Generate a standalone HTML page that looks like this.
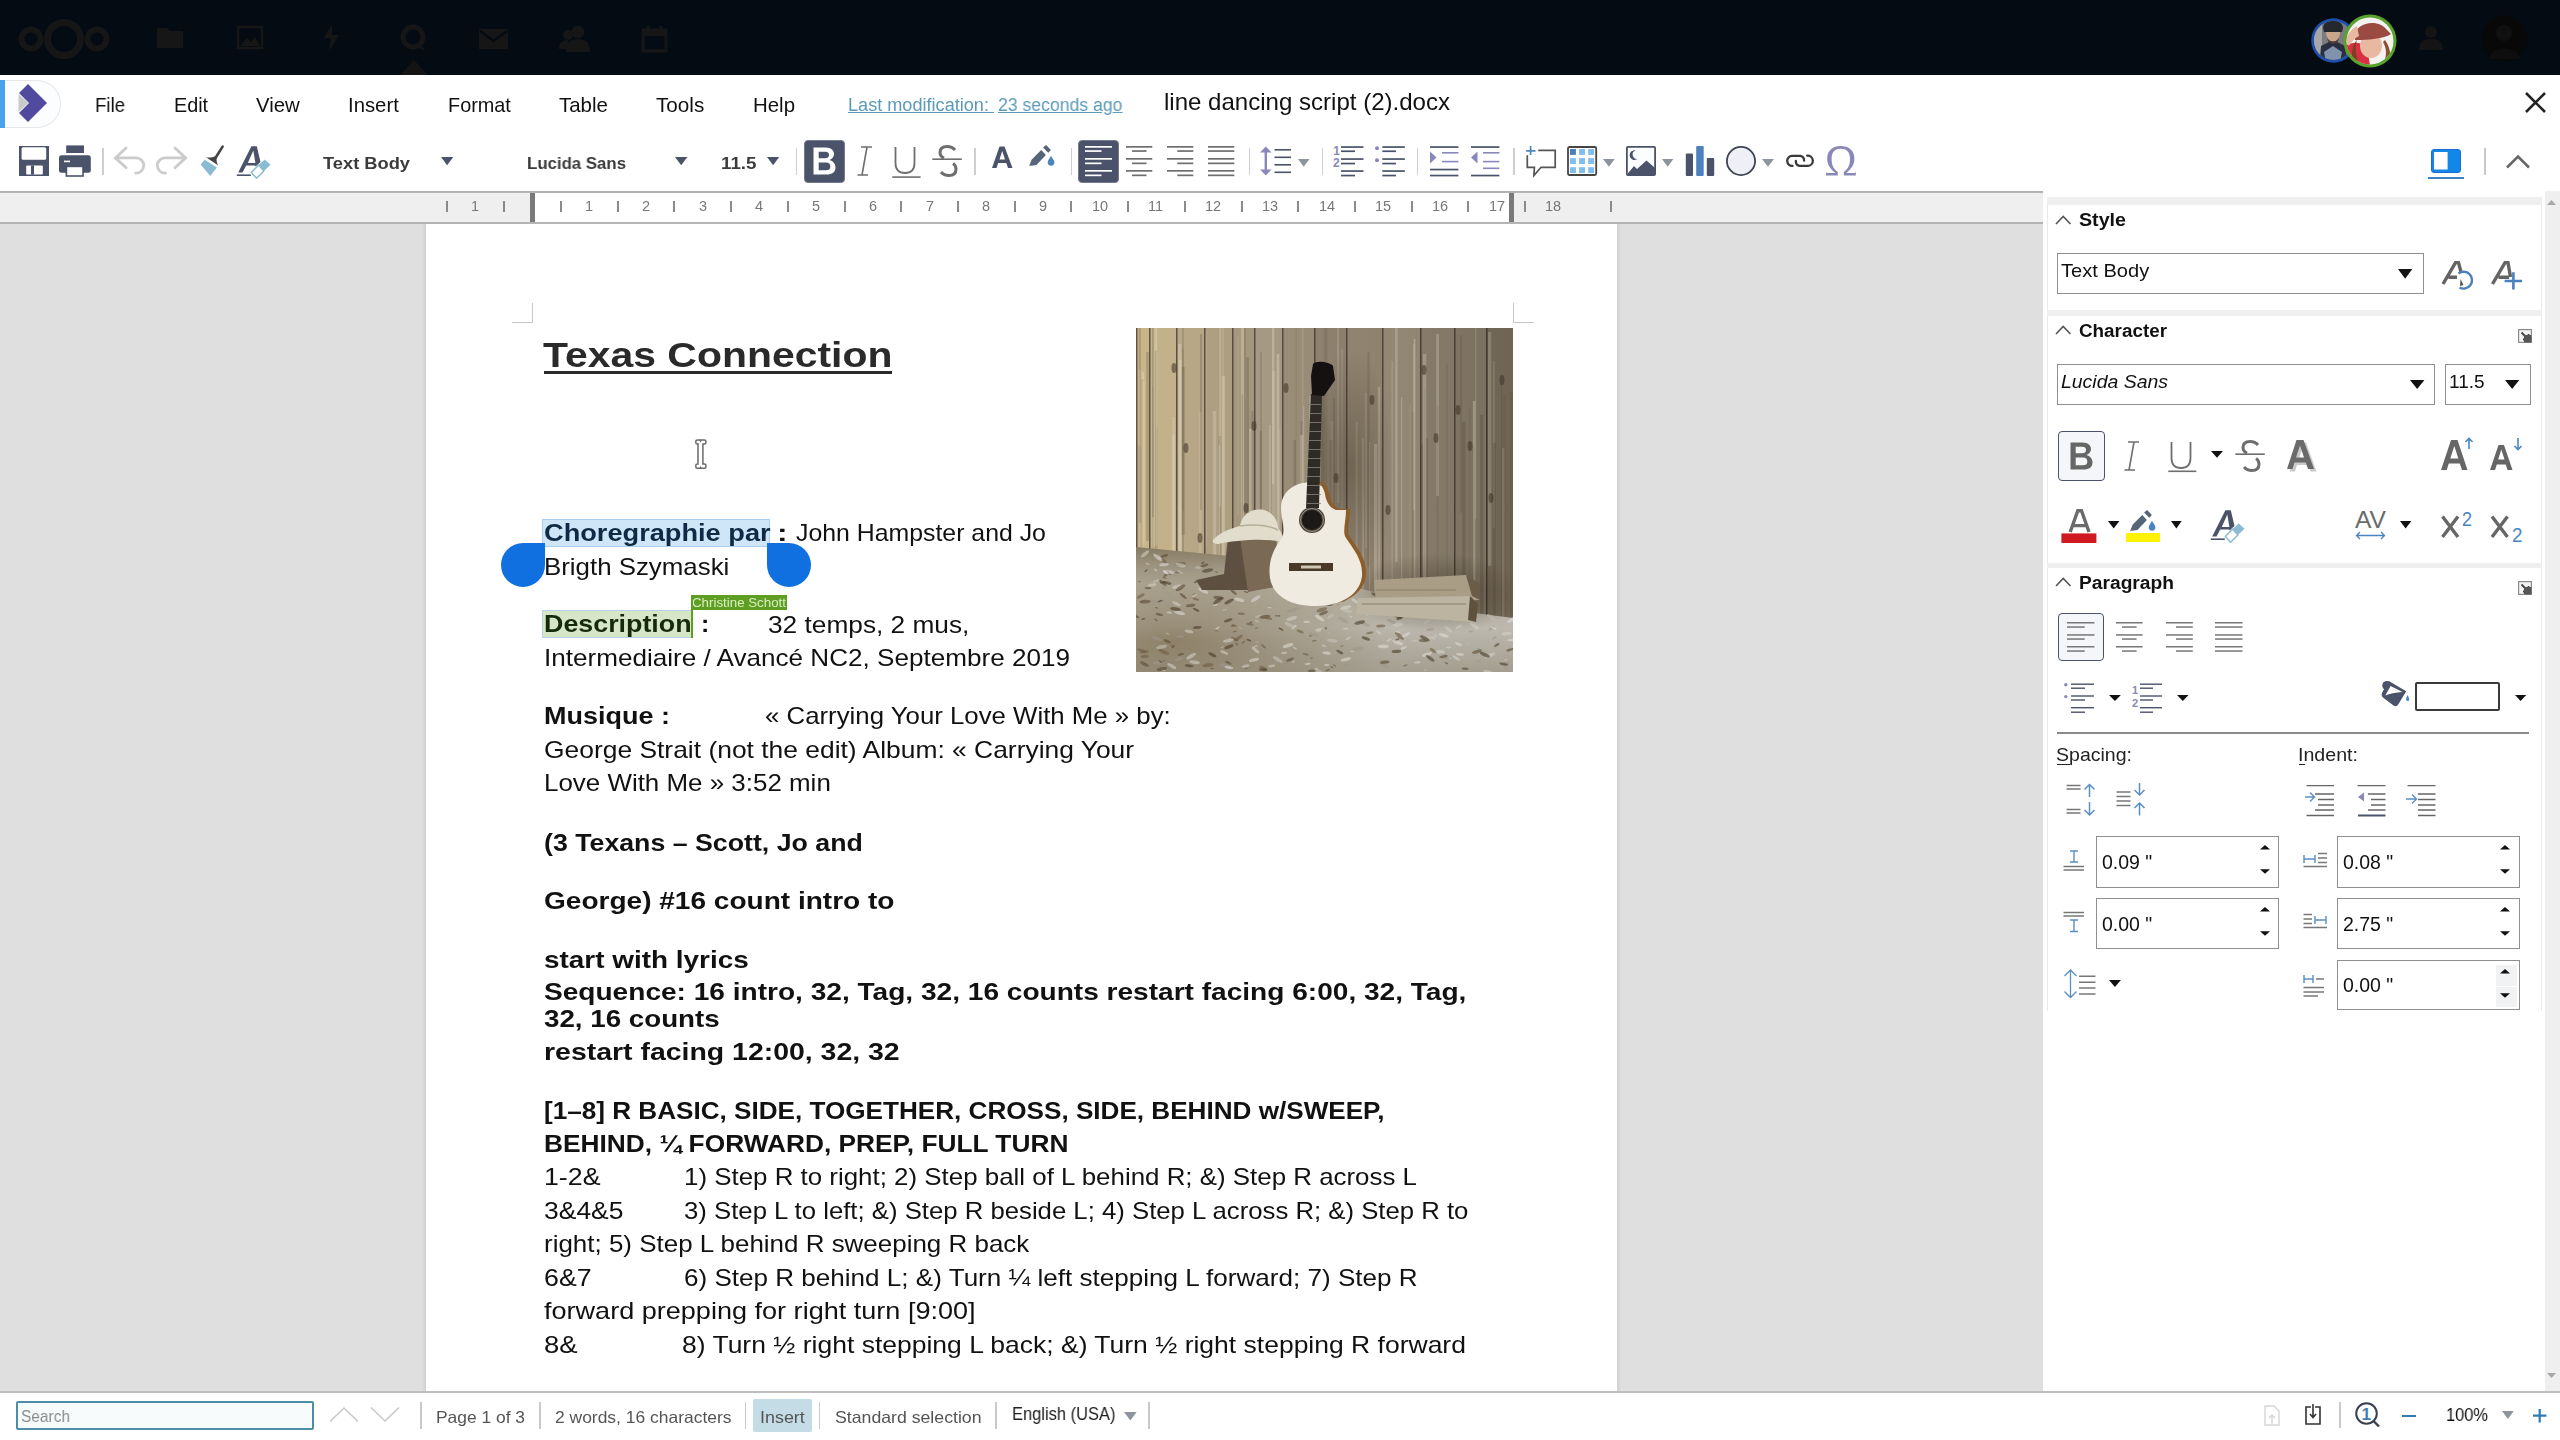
<!DOCTYPE html>
<html><head><meta charset="utf-8"><title>line dancing script (2).docx</title>
<style>
html,body{margin:0;padding:0;}
body{width:2560px;height:1440px;position:relative;overflow:hidden;background:#fff;font-family:"Liberation Sans",sans-serif;}
.tx{position:absolute;white-space:pre;will-change:transform;}
svg{overflow:visible;}

</style></head><body>
<div style="position:absolute;left:0px;top:0px;width:2560px;height:75px;background:#040b13;"></div>
<div style="position:absolute;left:0px;top:80px;width:5px;height:48px;background:#4aa3ea;"></div>
<div style="position:absolute;left:5px;top:80px;width:56px;height:48px;background:#fbfdff;border:1.5px solid #e6e6e6;border-left:none;border-radius:0 24px 24px 0;box-sizing:border-box;"></div>
<div id="t1" class="tx" style="left:94.6px;top:96.04px;font-size:19.8px;line-height:19.8px;color:#111;font-weight:normal;font-family:'Liberation Sans',sans-serif;transform:scaleX(0.9459);transform-origin:0 0;">File</div>
<div id="t2" class="tx" style="left:174.3px;top:96.04px;font-size:19.8px;line-height:19.8px;color:#111;font-weight:normal;font-family:'Liberation Sans',sans-serif;transform:scaleX(0.9973);transform-origin:0 0;">Edit</div>
<div id="t3" class="tx" style="left:256.2px;top:96.04px;font-size:19.8px;line-height:19.8px;color:#111;font-weight:normal;font-family:'Liberation Sans',sans-serif;transform:scaleX(1.0298);transform-origin:0 0;">View</div>
<div id="t4" class="tx" style="left:348px;top:96.04px;font-size:19.8px;line-height:19.8px;color:#111;font-weight:normal;font-family:'Liberation Sans',sans-serif;transform:scaleX(1.0266);transform-origin:0 0;">Insert</div>
<div id="t5" class="tx" style="left:447.6px;top:96.04px;font-size:19.8px;line-height:19.8px;color:#111;font-weight:normal;font-family:'Liberation Sans',sans-serif;transform:scaleX(1.0039);transform-origin:0 0;">Format</div>
<div id="t6" class="tx" style="left:558.5px;top:96.04px;font-size:19.8px;line-height:19.8px;color:#111;font-weight:normal;font-family:'Liberation Sans',sans-serif;transform:scaleX(1.0339);transform-origin:0 0;">Table</div>
<div id="t7" class="tx" style="left:656.2px;top:96.04px;font-size:19.8px;line-height:19.8px;color:#111;font-weight:normal;font-family:'Liberation Sans',sans-serif;transform:scaleX(1.0457);transform-origin:0 0;">Tools</div>
<div id="t8" class="tx" style="left:753.3px;top:96.04px;font-size:19.8px;line-height:19.8px;color:#111;font-weight:normal;font-family:'Liberation Sans',sans-serif;transform:scaleX(1.0323);transform-origin:0 0;">Help</div>
<div id="t9" class="tx" style="left:848px;top:96.26px;font-size:18px;line-height:18px;color:#5b9ab8;font-weight:normal;font-family:'Liberation Sans',sans-serif;transform:scaleX(1.0064);transform-origin:0 0;text-decoration:underline;">Last modification: </div>
<div id="t10" class="tx" style="left:997.5px;top:96.26px;font-size:18px;line-height:18px;color:#5b9ab8;font-weight:normal;font-family:'Liberation Sans',sans-serif;transform:scaleX(0.9795);transform-origin:0 0;text-decoration:underline;">23 seconds ago</div>
<div id="t11" class="tx" style="left:1163.5px;top:89.68px;font-size:24px;line-height:24px;color:#111;font-weight:normal;font-family:'Liberation Sans',sans-serif;transform:scaleX(1.0019);transform-origin:0 0;">line dancing script (2).docx</div>
<div style="position:absolute;left:0px;top:191px;width:2043px;height:2px;background:#b4b4b4;"></div>
<div style="position:absolute;left:0px;top:193px;width:2043px;height:29px;background:#efefef;"></div>
<div style="position:absolute;left:0px;top:222px;width:2043px;height:2px;background:#b4b4b4;"></div>
<div style="position:absolute;left:534.5px;top:193px;width:975px;height:29px;background:#fff;"></div>
<div style="position:absolute;left:530px;top:193px;width:4.7px;height:29px;background:#7a7a7a;"></div>
<div style="position:absolute;left:1509px;top:193px;width:5px;height:29px;background:#7a7a7a;"></div>
<svg style="position:absolute;left:19px;top:146px;" width="30" height="30" viewBox="0 0 30 30"><path d="M0 0 H30 V30 H0 Z" fill="#4a5369"/><rect x="2.6" y="1.2" width="24.6" height="12.6" rx="1.5" fill="#fff"/><rect x="7.2" y="19.4" width="16.6" height="9.2" rx="1.2" fill="#fff"/><rect x="12" y="19.4" width="3" height="9.2" fill="#4a5369"/></svg>
<svg style="position:absolute;left:59px;top:145px;" width="32" height="32" viewBox="0 0 32 32"><rect x="7.2" y="0.4" width="17.8" height="7.6" fill="#4a5369"/><rect x="0" y="10.2" width="31.8" height="17.6" rx="2.5" fill="#4a5369"/><rect x="5" y="15.6" width="6" height="1.6" fill="#fff"/><rect x="7.4" y="21.4" width="16.6" height="9.6" fill="#fff" stroke="#4a5369" stroke-width="1.6"/></svg>
<div style="position:absolute;left:102.4px;top:148px;width:1.2px;height:27px;background:#cfcfcf;"></div>
<svg style="position:absolute;left:113px;top:146px;" width="34" height="32" viewBox="0 0 34 32"><path d="M13.1 1.9 L2.4 11.9 L13.1 21.8 M2.4 11.9 H23.6 A7.6 7.6 0 0 1 22.6 27.1" fill="none" stroke="#cbcbcb" stroke-width="2.8" stroke-linecap="round"/></svg>
<svg style="position:absolute;left:154px;top:146px;" width="34" height="32" viewBox="0 0 34 32"><path d="M21 1.9 L31.7 11.9 L21 21.8 M31.7 11.9 H10.5 A7.6 7.6 0 0 0 11.5 27.1" fill="none" stroke="#cbcbcb" stroke-width="2.8" stroke-linecap="round"/></svg>
<svg style="position:absolute;left:195px;top:140px;" width="80" height="42" viewBox="0 0 80 42"><path d="M27.6 6.6 L20.6 17.8" stroke="#444" stroke-width="2.6" stroke-linecap="round"/><path d="M11 17.3 C14 18 18 17 20.5 16.2 L21.6 18.5 C21.3 21 22 23.5 23.3 25.6 Z" fill="#444"/><path d="M9.7 19.7 L21.9 27.5 L15.3 35.9 L5.6 24.4 Z" fill="#8bbbd2"/><path d="M43.2 32.6 L56.4 6.3 H61.8 L65.5 22 L60.5 26.5 L60.2 25.6 H51.2 L47.5 32.6 Z M52.8 23 H60.4 L58.3 10.5 Z" fill="#4a5369"/><rect x="41.8" y="34.4" width="14" height="1.6" fill="#4a5369"/><path d="M69.7 19.4 L75.6 24.7 L68.9 31 L63.6 25 Z" fill="#8bbbd2"/><path d="M63.6 25 L68.9 31 L61.6 38.3 L56.3 32.5 Z" fill="#fff" stroke="#8bbbd2" stroke-width="1.5" stroke-linejoin="round"/></svg>
<div id="t12" class="tx" style="left:322.5px;top:154.81px;font-size:17px;line-height:17px;color:#3b3b3b;font-weight:bold;font-family:'Liberation Sans',sans-serif;transform:scaleX(1.0751);transform-origin:0 0;">Text Body</div>
<svg style="position:absolute;left:441px;top:157px;" width="12.300000000000011" height="8.300000000000011" viewBox="0 0 12.300000000000011 8.300000000000011"><path d="M0 0 H12.300000000000011 L6.150000000000006 8.300000000000011 Z" fill="#4a5369"/></svg>
<div id="t13" class="tx" style="left:526.5px;top:154.81px;font-size:17px;line-height:17px;color:#3b3b3b;font-weight:bold;font-family:'Liberation Sans',sans-serif;transform:scaleX(0.9886);transform-origin:0 0;">Lucida Sans</div>
<svg style="position:absolute;left:674.6px;top:157px;" width="12.399999999999977" height="8.300000000000011" viewBox="0 0 12.399999999999977 8.300000000000011"><path d="M0 0 H12.399999999999977 L6.199999999999989 8.300000000000011 Z" fill="#4a5369"/></svg>
<div id="t14" class="tx" style="left:721px;top:154.81px;font-size:17px;line-height:17px;color:#3b3b3b;font-weight:bold;font-family:'Liberation Sans',sans-serif;transform:scaleX(1.1040);transform-origin:0 0;">11.5</div>
<svg style="position:absolute;left:766.8px;top:157px;" width="12.200000000000045" height="8.300000000000011" viewBox="0 0 12.200000000000045 8.300000000000011"><path d="M0 0 H12.200000000000045 L6.100000000000023 8.300000000000011 Z" fill="#4a5369"/></svg>
<div style="position:absolute;left:796.3px;top:148px;width:1.2px;height:27px;background:#cfcfcf;"></div>
<div style="position:absolute;left:804.3px;top:140px;width:40.5px;height:42.6px;background:#4a5369;border:1px solid #737b8c;border-radius:4px;box-sizing:border-box;"></div>
<svg style="position:absolute;left:811.6px;top:146px;" width="25" height="30" viewBox="0 0 25 30"><path d="M1.5 1.5 H13 C20 1.5 22 5 22 8 C22 11 20 13 17.5 14 C21 15 23.5 17.5 23.5 21.5 C23.5 26 20.5 28.5 14 28.5 H1.5 Z M6.7 5.8 V12.3 H13 C15.8 12.3 17 11 17 9 C17 7 15.8 5.8 13 5.8 Z M6.7 16.5 V24.2 H13.8 C17 24.2 18.3 23 18.3 20.4 C18.3 17.8 17 16.5 13.8 16.5 Z" fill="#fff"/></svg>
<svg style="position:absolute;left:857px;top:146px;" width="16" height="30" viewBox="0 0 16 30"><path d="M4 1 H15 M0.5 29 H11 M10 1 L5 29" stroke="#6e6e6e" stroke-width="1.6" fill="none"/></svg>
<svg style="position:absolute;left:892px;top:146px;" width="30" height="32" viewBox="0 0 30 32"><path d="M3.5 1 V17 C3.5 24 7 27 13 27 C19 27 22.5 24 22.5 17 V1" stroke="#6e6e6e" stroke-width="1.8" fill="none"/><rect x="0.3" y="30.3" width="28.3" height="1.6" fill="#6e6e6e"/></svg>
<svg style="position:absolute;left:932px;top:145px;" width="31" height="33" viewBox="0 0 31 33"><path d="M23 5 C21 2.5 18 1.5 15 1.5 C10 1.5 8 4 8 7.5 C8 10.3 9.5 12 12 13.2" stroke="#6e6e6e" stroke-width="3" fill="none"/><path d="M9 27 C11 29.5 14 30.5 17 30.5 C22 30.5 24 28 24 24 C24 21.5 23 19.8 21 18.5" stroke="#6e6e6e" stroke-width="3" fill="none"/><rect x="0.3" y="13.4" width="29.5" height="1.6" fill="#6e6e6e"/></svg>
<div style="position:absolute;left:974.4px;top:148px;width:1.2px;height:27px;background:#cfcfcf;"></div>
<svg style="position:absolute;left:992px;top:146px;" width="21" height="23" viewBox="0 0 21 23"><path d="M0 22 L7.5 0.5 H12.5 L20.5 22 H16 L14.3 17 H6.2 L4.5 22 Z M7.5 13.5 H13 L10.2 5 Z" fill="#4a5369"/></svg>
<svg style="position:absolute;left:980px;top:138px;" width="80" height="34" viewBox="0 0 80 34"><path d="M63.1 9.6 L66.1 7.1 L70.9 12 L68.2 14.8 Z" fill="#55657a"/><path d="M61.25 12.1 L65.9 17.1 L56.4 27.1 L53 27.4 L49.1 27.7 L51.8 21.6 Z" fill="#55657a"/><path d="M71 17.9 C69.5 20.5 67.7 22.5 67.7 24.3 A3.35 3.35 0 0 0 74.4 24.3 C74.4 22.5 72.5 20.5 71 17.9 Z" fill="#4a85c0"/></svg>
<div style="position:absolute;left:1070.6px;top:148px;width:1.2px;height:27px;background:#cfcfcf;"></div>
<div style="position:absolute;left:1078.2px;top:140px;width:40.5px;height:42.6px;background:#4a5369;border:1px solid #737b8c;border-radius:4px;box-sizing:border-box;"></div>
<svg style="position:absolute;left:1084.8px;top:146px;" width="28" height="31" viewBox="0 0 28 31"><rect x="0" y="0" width="27" height="1.7" fill="#fff"/><rect x="0" y="4.2" width="16.5" height="1.7" fill="#fff"/><rect x="0" y="12" width="27" height="1.7" fill="#fff"/><rect x="0" y="16.5" width="16.5" height="1.7" fill="#fff"/><rect x="0" y="24" width="27" height="1.7" fill="#fff"/><rect x="0" y="28.5" width="16.5" height="1.7" fill="#fff"/></svg>
<svg style="position:absolute;left:1125.8px;top:146px;" width="28" height="31" viewBox="0 0 28 31"><rect x="0" y="0" width="26.3" height="1.7" fill="#6e6e6e"/><rect x="6" y="4.2" width="14.5" height="1.7" fill="#6e6e6e"/><rect x="0" y="12" width="26.3" height="1.7" fill="#6e6e6e"/><rect x="6" y="16.5" width="14.5" height="1.7" fill="#6e6e6e"/><rect x="0" y="24" width="26.3" height="1.7" fill="#6e6e6e"/><rect x="6" y="28.5" width="14.5" height="1.7" fill="#6e6e6e"/></svg>
<svg style="position:absolute;left:1166.8px;top:146px;" width="28" height="31" viewBox="0 0 28 31"><rect x="0" y="0" width="26.3" height="1.7" fill="#6e6e6e"/><rect x="10.3" y="4.2" width="16.0" height="1.7" fill="#6e6e6e"/><rect x="0" y="12" width="26.3" height="1.7" fill="#6e6e6e"/><rect x="10.3" y="16.5" width="16.0" height="1.7" fill="#6e6e6e"/><rect x="0" y="24" width="26.3" height="1.7" fill="#6e6e6e"/><rect x="10.3" y="28.5" width="16.0" height="1.7" fill="#6e6e6e"/></svg>
<svg style="position:absolute;left:1207.8px;top:146px;" width="28" height="31" viewBox="0 0 28 31"><rect x="0" y="0" width="26.3" height="1.7" fill="#6e6e6e"/><rect x="0" y="4.2" width="26.3" height="1.7" fill="#6e6e6e"/><rect x="0" y="12" width="26.3" height="1.7" fill="#6e6e6e"/><rect x="0" y="16.5" width="26.3" height="1.7" fill="#6e6e6e"/><rect x="0" y="24" width="26.3" height="1.7" fill="#6e6e6e"/><rect x="0" y="28.5" width="26.3" height="1.7" fill="#6e6e6e"/></svg>
<div style="position:absolute;left:1248.5px;top:148px;width:1.2px;height:27px;background:#cfcfcf;"></div>
<svg style="position:absolute;left:1260px;top:146px;" width="32" height="31" viewBox="0 0 32 31"><path d="M5.8 0.5 L11.5 6.5 H7 V23.5 H11.5 L5.8 29.5 L0 23.5 H4.6 V6.5 H0 Z" fill="#8a87ba"/><rect x="14.5" y="3" width="16.5" height="1.6" fill="#4a5369"/><rect x="14.5" y="10.5" width="16.5" height="1.6" fill="#4a5369"/><rect x="14.5" y="18" width="16.5" height="1.6" fill="#4a5369"/><rect x="14.5" y="25.5" width="16.5" height="1.6" fill="#4a5369"/></svg>
<svg style="position:absolute;left:1297.5px;top:159px;" width="11.5" height="7.699999999999989" viewBox="0 0 11.5 7.699999999999989"><path d="M0 0 H11.5 L5.75 7.699999999999989 Z" fill="#8d949e"/></svg>
<div style="position:absolute;left:1321.6px;top:148px;width:1.2px;height:27px;background:#cfcfcf;"></div>
<svg style="position:absolute;left:1333px;top:145px;" width="32" height="32" viewBox="0 0 32 32"><text x="0.3" y="10" font-family="Liberation Sans" font-size="12" font-weight="bold" fill="#8a87ba">1</text><text x="0" y="21.8" font-family="Liberation Sans" font-size="12" font-weight="bold" fill="#8a87ba">2</text><rect x="8" y="1.2" width="22.5" height="1.7" fill="#4a5369"/><rect x="8" y="5.4" width="14" height="1.7" fill="#4a5369"/><rect x="8" y="13.2" width="22.5" height="1.7" fill="#4a5369"/><rect x="8" y="17.7" width="14" height="1.7" fill="#4a5369"/><rect x="8" y="25.2" width="22.5" height="1.7" fill="#4a5369"/><rect x="8" y="29.7" width="14" height="1.7" fill="#4a5369"/></svg>
<svg style="position:absolute;left:1373px;top:145px;" width="33" height="32" viewBox="0 0 33 32"><circle cx="4" cy="3.2" r="2" fill="#8a87ba"/><circle cx="4" cy="15.2" r="2" fill="#8a87ba"/><rect x="9.3" y="1.2" width="22.5" height="1.7" fill="#4a5369"/><rect x="9.3" y="5.4" width="13.7" height="1.7" fill="#4a5369"/><rect x="9.3" y="13.2" width="22.5" height="1.7" fill="#4a5369"/><rect x="9.3" y="17.7" width="13.7" height="1.7" fill="#4a5369"/><rect x="9.3" y="25.2" width="22.5" height="1.7" fill="#4a5369"/><rect x="9.3" y="29.7" width="13.7" height="1.7" fill="#4a5369"/></svg>
<div style="position:absolute;left:1417.3px;top:148px;width:1.2px;height:27px;background:#cfcfcf;"></div>
<svg style="position:absolute;left:1430px;top:145px;" width="30" height="32" viewBox="0 0 30 32"><path d="M0 6.4 L6.5 12.5 L0 18.5 Z" fill="#8a87ba"/><rect x="0" y="1.2" width="28.4" height="1.7" fill="#4a5369"/><rect x="12" y="7" width="16.4" height="1.6" fill="#8a87ba"/><rect x="12" y="15.8" width="16.4" height="1.6" fill="#8a87ba"/><rect x="0" y="23.7" width="28.4" height="1.7" fill="#4a5369"/><rect x="0" y="29.7" width="28.4" height="1.7" fill="#4a5369"/></svg>
<svg style="position:absolute;left:1471px;top:145px;" width="30" height="32" viewBox="0 0 30 32"><path d="M6.5 6.4 L0 12.5 L6.5 18.5 Z" fill="#8a87ba"/><rect x="0" y="1.2" width="28.4" height="1.7" fill="#4a5369"/><rect x="12" y="7" width="16.4" height="1.6" fill="#8a87ba"/><rect x="12" y="15.8" width="16.4" height="1.6" fill="#8a87ba"/><rect x="12" y="22.5" width="16.4" height="1.6" fill="#8a87ba"/><rect x="0" y="29.7" width="28.4" height="1.7" fill="#4a5369"/></svg>
<div style="position:absolute;left:1513.4px;top:148px;width:1.2px;height:27px;background:#cfcfcf;"></div>
<svg style="position:absolute;left:1525px;top:145px;" width="33" height="33" viewBox="0 0 33 33"><path d="M2.3 10.2 V22.3 H9.4 L8.9 30.5 L16 22.3 H30.2 V5.3 H13.3" fill="none" stroke="#555" stroke-width="1.7"/><path d="M5.6 1 V10 M1.2 5.9 H10.5" stroke="#4a85c0" stroke-width="1.7"/></svg>
<svg style="position:absolute;left:1567px;top:146px;" width="31" height="31" viewBox="0 0 31 31"><rect x="1" y="1" width="28.2" height="28" rx="1.5" fill="#fff" stroke="#444" stroke-width="1.8"/><rect x="3.0" y="3.0" width="5.9" height="5.9" fill="#4a80b8"/><rect x="3.0" y="12.1" width="5.9" height="5.9" fill="#82bdf0"/><rect x="3.0" y="21.2" width="5.9" height="5.9" fill="#82bdf0"/><rect x="12.1" y="3.0" width="5.9" height="5.9" fill="#82bdf0"/><rect x="12.1" y="12.1" width="5.9" height="5.9" fill="#82bdf0"/><rect x="12.1" y="21.2" width="5.9" height="5.9" fill="#82bdf0"/><rect x="21.2" y="3.0" width="5.9" height="5.9" fill="#82bdf0"/><rect x="21.2" y="12.1" width="5.9" height="5.9" fill="#82bdf0"/><rect x="21.2" y="21.2" width="5.9" height="5.9" fill="#82bdf0"/></svg>
<svg style="position:absolute;left:1603.2px;top:159px;" width="11.799999999999955" height="7.699999999999989" viewBox="0 0 11.799999999999955 7.699999999999989"><path d="M0 0 H11.799999999999955 L5.899999999999977 7.699999999999989 Z" fill="#8d949e"/></svg>
<svg style="position:absolute;left:1626px;top:146px;" width="31" height="31" viewBox="0 0 31 31"><rect x="0.9" y="0.9" width="28.2" height="28.2" rx="1" fill="#fbfdff" stroke="#4a5369" stroke-width="1.8"/><path d="M1 28.5 L8 20 L11 23 L20.5 14.5 L29 22 V29 H1 Z" fill="#4a5369"/><path d="M9.8 4.5 A4.8 4.8 0 1 0 11.5 12.8 A3.4 3.6 0 0 1 9.8 4.5 Z" fill="#4a5369"/></svg>
<svg style="position:absolute;left:1662.3px;top:159px;" width="11.400000000000091" height="7.699999999999989" viewBox="0 0 11.400000000000091 7.699999999999989"><path d="M0 0 H11.400000000000091 L5.7000000000000455 7.699999999999989 Z" fill="#8d949e"/></svg>
<svg style="position:absolute;left:1685px;top:146px;" width="31" height="31" viewBox="0 0 31 31"><rect x="0.8" y="7.6" width="7.2" height="22.4" rx="1" fill="#4a5369"/><rect x="11.2" y="0" width="7.5" height="30" rx="1" fill="#4c81bd"/><rect x="21.8" y="12" width="7.4" height="18" rx="1" fill="#4a5369"/></svg>
<svg style="position:absolute;left:1726px;top:146px;" width="31" height="31" viewBox="0 0 31 31"><circle cx="15" cy="15" r="14.1" fill="#eef0f5" stroke="#3d4452" stroke-width="1.8"/></svg>
<svg style="position:absolute;left:1761.8px;top:159px;" width="12.0" height="7.699999999999989" viewBox="0 0 12.0 7.699999999999989"><path d="M0 0 H12.0 L6.0 7.699999999999989 Z" fill="#8d949e"/></svg>
<svg style="position:absolute;left:1780px;top:140px;" width="80" height="42" viewBox="0 0 80 42"><path d="M12.5 25.9 A5 5 0 0 1 12 15.9 H20.3 A4.6 4.6 0 0 1 24.1 20.6 M27.2 15.6 A5 5 0 0 1 28.1 25.9 H19.4 A4.6 4.6 0 0 1 15.9 20.9" fill="none" stroke="#3a3a3a" stroke-width="2.3" stroke-linecap="round"/><path d="M46.1 35.6 H57.8 V32 C52.5 28 51.6 24 51.6 18.5 C51.6 12 55.1 8.75 60.8 8.75 C66.5 8.75 70 12 70 18.5 C70 24 69.1 28 63.8 32 V35.6 H75.8 V31.8 L75 33 H66.3 C71 29 74.4 25 74.4 18.5 C74.4 10.5 68.6 6.1 60.8 6.1 C53 6.1 47.2 10.5 47.2 18.5 C47.2 25 50.6 29 55.3 33 H46.9 L46.1 31.8 Z" fill="#8a87ba"/></svg>
<svg style="position:absolute;left:2431px;top:149px;" width="30" height="24" viewBox="0 0 30 24"><rect x="0.5" y="0.5" width="29" height="23" rx="2.5" fill="#1387e8" stroke="#1a6fcc" stroke-width="1"/><rect x="3" y="3" width="13.6" height="17.5" fill="#fff"/></svg>
<div style="position:absolute;left:2428px;top:177.2px;width:36px;height:2.2px;background:#3b82c8;"></div>
<div style="position:absolute;left:2484.4px;top:148px;width:1.2px;height:26.69999999999999px;background:#c8c8c8;"></div>
<svg style="position:absolute;left:2505px;top:154px;" width="27" height="16" viewBox="0 0 27 16"><path d="M2 13.5 L13 2.5 L24 13.5" fill="none" stroke="#666" stroke-width="2.6"/></svg>
<svg style="position:absolute;left:2524px;top:91px;" width="23" height="23" viewBox="0 0 23 23"><path d="M2 2 L21 21 M21 2 L2 21" stroke="#222" stroke-width="2.6"/></svg>
<svg style="position:absolute;left:17px;top:83px;" width="32" height="40" viewBox="0 0 32 40"><path d="M11 1 L30 20 L11 39 L2 30 L12 20 L2 10 Z" fill="#514a9e"/><path d="M1.5 11 L11.5 20 L1.5 29 Z" fill="#cacaca"/></svg>
<div style="position:absolute;left:446px;top:201px;width:2px;height:11px;background:#8a8a8a;"></div>
<div style="position:absolute;left:503px;top:201px;width:2px;height:11px;background:#8a8a8a;"></div>
<div id="t15" class="tx" style="left:470.5px;top:199.33px;font-size:14.5px;line-height:14.5px;color:#777;font-weight:normal;font-family:'Liberation Sans',sans-serif;">1</div>
<div id="t16" class="tx" style="left:585.1999999999999px;top:199.33px;font-size:14.5px;line-height:14.5px;color:#777;font-weight:normal;font-family:'Liberation Sans',sans-serif;">1</div>
<div style="position:absolute;left:560px;top:201px;width:2px;height:11px;background:#8a8a8a;"></div>
<div id="t17" class="tx" style="left:641.92px;top:199.33px;font-size:14.5px;line-height:14.5px;color:#777;font-weight:normal;font-family:'Liberation Sans',sans-serif;">2</div>
<div style="position:absolute;left:617px;top:201px;width:2px;height:11px;background:#8a8a8a;"></div>
<div id="t18" class="tx" style="left:698.6399999999999px;top:199.33px;font-size:14.5px;line-height:14.5px;color:#777;font-weight:normal;font-family:'Liberation Sans',sans-serif;">3</div>
<div style="position:absolute;left:673px;top:201px;width:2px;height:11px;background:#8a8a8a;"></div>
<div id="t19" class="tx" style="left:755.3599999999999px;top:199.33px;font-size:14.5px;line-height:14.5px;color:#777;font-weight:normal;font-family:'Liberation Sans',sans-serif;">4</div>
<div style="position:absolute;left:730px;top:201px;width:2px;height:11px;background:#8a8a8a;"></div>
<div id="t20" class="tx" style="left:812.0799999999999px;top:199.33px;font-size:14.5px;line-height:14.5px;color:#777;font-weight:normal;font-family:'Liberation Sans',sans-serif;">5</div>
<div style="position:absolute;left:787px;top:201px;width:2px;height:11px;background:#8a8a8a;"></div>
<div id="t21" class="tx" style="left:868.8px;top:199.33px;font-size:14.5px;line-height:14.5px;color:#777;font-weight:normal;font-family:'Liberation Sans',sans-serif;">6</div>
<div style="position:absolute;left:844px;top:201px;width:2px;height:11px;background:#8a8a8a;"></div>
<div id="t22" class="tx" style="left:925.52px;top:199.33px;font-size:14.5px;line-height:14.5px;color:#777;font-weight:normal;font-family:'Liberation Sans',sans-serif;">7</div>
<div style="position:absolute;left:900px;top:201px;width:2px;height:11px;background:#8a8a8a;"></div>
<div id="t23" class="tx" style="left:982.2399999999999px;top:199.33px;font-size:14.5px;line-height:14.5px;color:#777;font-weight:normal;font-family:'Liberation Sans',sans-serif;">8</div>
<div style="position:absolute;left:957px;top:201px;width:2px;height:11px;background:#8a8a8a;"></div>
<div id="t24" class="tx" style="left:1038.9599999999998px;top:199.33px;font-size:14.5px;line-height:14.5px;color:#777;font-weight:normal;font-family:'Liberation Sans',sans-serif;">9</div>
<div style="position:absolute;left:1014px;top:201px;width:2px;height:11px;background:#8a8a8a;"></div>
<div id="t25" class="tx" style="left:1091.68px;top:199.33px;font-size:14.5px;line-height:14.5px;color:#777;font-weight:normal;font-family:'Liberation Sans',sans-serif;">10</div>
<div style="position:absolute;left:1070px;top:201px;width:2px;height:11px;background:#8a8a8a;"></div>
<div id="t26" class="tx" style="left:1148.3999999999999px;top:199.33px;font-size:14.5px;line-height:14.5px;color:#777;font-weight:normal;font-family:'Liberation Sans',sans-serif;">11</div>
<div style="position:absolute;left:1127px;top:201px;width:2px;height:11px;background:#8a8a8a;"></div>
<div id="t27" class="tx" style="left:1205.12px;top:199.33px;font-size:14.5px;line-height:14.5px;color:#777;font-weight:normal;font-family:'Liberation Sans',sans-serif;">12</div>
<div style="position:absolute;left:1184px;top:201px;width:2px;height:11px;background:#8a8a8a;"></div>
<div id="t28" class="tx" style="left:1261.84px;top:199.33px;font-size:14.5px;line-height:14.5px;color:#777;font-weight:normal;font-family:'Liberation Sans',sans-serif;">13</div>
<div style="position:absolute;left:1241px;top:201px;width:2px;height:11px;background:#8a8a8a;"></div>
<div id="t29" class="tx" style="left:1318.56px;top:199.33px;font-size:14.5px;line-height:14.5px;color:#777;font-weight:normal;font-family:'Liberation Sans',sans-serif;">14</div>
<div style="position:absolute;left:1297px;top:201px;width:2px;height:11px;background:#8a8a8a;"></div>
<div id="t30" class="tx" style="left:1375.28px;top:199.33px;font-size:14.5px;line-height:14.5px;color:#777;font-weight:normal;font-family:'Liberation Sans',sans-serif;">15</div>
<div style="position:absolute;left:1354px;top:201px;width:2px;height:11px;background:#8a8a8a;"></div>
<div id="t31" class="tx" style="left:1431.9999999999998px;top:199.33px;font-size:14.5px;line-height:14.5px;color:#777;font-weight:normal;font-family:'Liberation Sans',sans-serif;">16</div>
<div style="position:absolute;left:1411px;top:201px;width:2px;height:11px;background:#8a8a8a;"></div>
<div id="t32" class="tx" style="left:1488.72px;top:199.33px;font-size:14.5px;line-height:14.5px;color:#777;font-weight:normal;font-family:'Liberation Sans',sans-serif;">17</div>
<div style="position:absolute;left:1467px;top:201px;width:2px;height:11px;background:#8a8a8a;"></div>
<div id="t33" class="tx" style="left:1545.4399999999998px;top:199.33px;font-size:14.5px;line-height:14.5px;color:#777;font-weight:normal;font-family:'Liberation Sans',sans-serif;">18</div>
<div style="position:absolute;left:1524px;top:201px;width:2px;height:11px;background:#8a8a8a;"></div>
<div style="position:absolute;left:1610px;top:201px;width:1.5px;height:11px;background:#8a8a8a;"></div>
<div style="position:absolute;left:0px;top:224px;width:2043px;height:1168px;background:#dfdfdf;"></div>
<div style="position:absolute;left:422px;top:224px;width:4px;height:1168px;background:linear-gradient(to right,#dfdfdf,#cfcfcf);"></div>
<div style="position:absolute;left:1617px;top:224px;width:4px;height:1168px;background:linear-gradient(to left,#dfdfdf,#cfcfcf);"></div>
<div style="position:absolute;left:426px;top:224px;width:1191px;height:1168px;background:#fff;"></div>
<div style="position:absolute;left:512px;top:322px;width:21px;height:1px;background:#c8c8c8;"></div>
<div style="position:absolute;left:532px;top:303px;width:1px;height:20px;background:#c8c8c8;"></div>
<div style="position:absolute;left:1513px;top:322px;width:21px;height:1px;background:#c8c8c8;"></div>
<div style="position:absolute;left:1513px;top:303px;width:1px;height:20px;background:#c8c8c8;"></div>
<div id="t34" class="tx" style="left:543.1px;top:337.90px;font-size:34.5px;line-height:34.5px;color:#2a2a2a;font-weight:bold;font-family:'Liberation Sans',sans-serif;transform:scaleX(1.1860);transform-origin:0 0;">Texas Connection</div>
<div style="position:absolute;left:543.5px;top:371px;width:348.5px;height:2.5px;background:#2a2a2a;"></div>
<div style="position:absolute;left:542px;top:518.6px;width:228px;height:28px;background:#cfe5f8;border:1px solid #a9cff0;box-sizing:border-box;"></div>
<div style="position:absolute;left:542px;top:610px;width:150px;height:28px;background:#d6e6c6;border:1px solid #b6d2ea;box-sizing:border-box;"></div>
<div id="t35" class="tx" style="left:543.6px;top:521.66px;font-size:23.2px;line-height:23.2px;color:#0f2a44;font-weight:bold;font-family:'Liberation Sans',sans-serif;transform:scaleX(1.1724);transform-origin:0 0;">Choregraphie par</div>
<div id="t36" class="tx" style="left:776.6px;top:521.66px;font-size:23.2px;line-height:23.2px;color:#111;font-weight:bold;font-family:'Liberation Sans',sans-serif;transform:scaleX(1.3705);transform-origin:0 0;">:</div>
<div id="t37" class="tx" style="left:796.1px;top:522.36px;font-size:23.2px;line-height:23.2px;color:#111;font-weight:normal;font-family:'Liberation Sans',sans-serif;transform:scaleX(1.0712);transform-origin:0 0;">John Hampster and Jo</div>
<div id="t38" class="tx" style="left:543.6px;top:556.26px;font-size:23.2px;line-height:23.2px;color:#111;font-weight:normal;font-family:'Liberation Sans',sans-serif;transform:scaleX(1.1148);transform-origin:0 0;">Brigth Szymaski</div>
<div id="t39" class="tx" style="left:543.6px;top:613.36px;font-size:23.2px;line-height:23.2px;color:#152a0c;font-weight:bold;font-family:'Liberation Sans',sans-serif;transform:scaleX(1.1571);transform-origin:0 0;">Description</div>
<div id="t40" class="tx" style="left:701.4px;top:613.36px;font-size:23.2px;line-height:23.2px;color:#111;font-weight:bold;font-family:'Liberation Sans',sans-serif;transform:scaleX(1.0731);transform-origin:0 0;">:</div>
<div id="t41" class="tx" style="left:767.8000000000001px;top:613.86px;font-size:23.2px;line-height:23.2px;color:#111;font-weight:normal;font-family:'Liberation Sans',sans-serif;transform:scaleX(1.1324);transform-origin:0 0;">32 temps, 2 mus,</div>
<div id="t42" class="tx" style="left:543.6px;top:646.86px;font-size:23.2px;line-height:23.2px;color:#111;font-weight:normal;font-family:'Liberation Sans',sans-serif;transform:scaleX(1.1252);transform-origin:0 0;">Intermediaire / Avancé NC2, Septembre 2019</div>
<div id="t43" class="tx" style="left:544.2px;top:705.36px;font-size:23.2px;line-height:23.2px;color:#111;font-weight:bold;font-family:'Liberation Sans',sans-serif;transform:scaleX(1.1634);transform-origin:0 0;">Musique :</div>
<div id="t44" class="tx" style="left:765.2px;top:704.86px;font-size:23.2px;line-height:23.2px;color:#111;font-weight:normal;font-family:'Liberation Sans',sans-serif;transform:scaleX(1.1125);transform-origin:0 0;">« Carrying Your Love With Me » by:</div>
<div id="t45" class="tx" style="left:544.1px;top:738.86px;font-size:23.2px;line-height:23.2px;color:#111;font-weight:normal;font-family:'Liberation Sans',sans-serif;transform:scaleX(1.1389);transform-origin:0 0;">George Strait (not the edit) Album: « Carrying Your</div>
<div id="t46" class="tx" style="left:544.1px;top:772.06px;font-size:23.2px;line-height:23.2px;color:#111;font-weight:normal;font-family:'Liberation Sans',sans-serif;transform:scaleX(1.1183);transform-origin:0 0;">Love With Me » 3:52 min</div>
<div id="t47" class="tx" style="left:544.4px;top:831.76px;font-size:23.2px;line-height:23.2px;color:#111;font-weight:bold;font-family:'Liberation Sans',sans-serif;transform:scaleX(1.1525);transform-origin:0 0;">(3 Texans – Scott, Jo and</div>
<div id="t48" class="tx" style="left:544.4px;top:890.06px;font-size:23.2px;line-height:23.2px;color:#111;font-weight:bold;font-family:'Liberation Sans',sans-serif;transform:scaleX(1.2091);transform-origin:0 0;">George) #16 count intro to</div>
<div id="t49" class="tx" style="left:544.4px;top:948.56px;font-size:23.2px;line-height:23.2px;color:#111;font-weight:bold;font-family:'Liberation Sans',sans-serif;transform:scaleX(1.2033);transform-origin:0 0;">start with lyrics</div>
<div id="t50" class="tx" style="left:544.4px;top:981.16px;font-size:23.2px;line-height:23.2px;color:#111;font-weight:bold;font-family:'Liberation Sans',sans-serif;transform:scaleX(1.2105);transform-origin:0 0;">Sequence: 16 intro, 32, Tag, 32, 16 counts restart facing 6:00, 32, Tag,</div>
<div id="t51" class="tx" style="left:544.4px;top:1008.46px;font-size:23.2px;line-height:23.2px;color:#111;font-weight:bold;font-family:'Liberation Sans',sans-serif;transform:scaleX(1.1959);transform-origin:0 0;">32, 16 counts</div>
<div id="t52" class="tx" style="left:544.4px;top:1041.46px;font-size:23.2px;line-height:23.2px;color:#111;font-weight:bold;font-family:'Liberation Sans',sans-serif;transform:scaleX(1.2265);transform-origin:0 0;">restart facing 12:00, 32, 32</div>
<div id="t53" class="tx" style="left:543.8000000000001px;top:1099.86px;font-size:23.2px;line-height:23.2px;color:#111;font-weight:bold;font-family:'Liberation Sans',sans-serif;transform:scaleX(1.1259);transform-origin:0 0;">[1–8] R BASIC, SIDE, TOGETHER, CROSS, SIDE, BEHIND w/SWEEP,</div>
<div id="t54" class="tx" style="left:543.8000000000001px;top:1132.66px;font-size:23.2px;line-height:23.2px;color:#111;font-weight:bold;font-family:'Liberation Sans',sans-serif;transform:scaleX(1.1338);transform-origin:0 0;">BEHIND, ¼ FORWARD, PREP, FULL TURN</div>
<div id="t55" class="tx" style="left:543.6px;top:1166.36px;font-size:23.2px;line-height:23.2px;color:#111;font-weight:normal;font-family:'Liberation Sans',sans-serif;transform:scaleX(1.1534);transform-origin:0 0;">1-2&amp;</div>
<div id="t56" class="tx" style="left:683.8000000000001px;top:1166.36px;font-size:23.2px;line-height:23.2px;color:#111;font-weight:normal;font-family:'Liberation Sans',sans-serif;transform:scaleX(1.1166);transform-origin:0 0;">1) Step R to right; 2) Step ball of L behind R; &amp;) Step R across L</div>
<div id="t57" class="tx" style="left:543.6px;top:1199.86px;font-size:23.2px;line-height:23.2px;color:#111;font-weight:normal;font-family:'Liberation Sans',sans-serif;transform:scaleX(1.1418);transform-origin:0 0;">3&amp;4&amp;5</div>
<div id="t58" class="tx" style="left:683.8000000000001px;top:1199.86px;font-size:23.2px;line-height:23.2px;color:#111;font-weight:normal;font-family:'Liberation Sans',sans-serif;transform:scaleX(1.1093);transform-origin:0 0;">3) Step L to left; &amp;) Step R beside L; 4) Step L across R; &amp;) Step R to</div>
<div id="t59" class="tx" style="left:543.6px;top:1233.26px;font-size:23.2px;line-height:23.2px;color:#111;font-weight:normal;font-family:'Liberation Sans',sans-serif;transform:scaleX(1.1195);transform-origin:0 0;">right; 5) Step L behind R sweeping R back</div>
<div id="t60" class="tx" style="left:543.6px;top:1266.56px;font-size:23.2px;line-height:23.2px;color:#111;font-weight:normal;font-family:'Liberation Sans',sans-serif;transform:scaleX(1.1535);transform-origin:0 0;">6&amp;7</div>
<div id="t61" class="tx" style="left:683.6px;top:1266.56px;font-size:23.2px;line-height:23.2px;color:#111;font-weight:normal;font-family:'Liberation Sans',sans-serif;transform:scaleX(1.1241);transform-origin:0 0;">6) Step R behind L; &amp;) Turn ¼ left stepping L forward; 7) Step R</div>
<div id="t62" class="tx" style="left:543.6px;top:1300.46px;font-size:23.2px;line-height:23.2px;color:#111;font-weight:normal;font-family:'Liberation Sans',sans-serif;transform:scaleX(1.1667);transform-origin:0 0;">forward prepping for right turn [9:00]</div>
<div id="t63" class="tx" style="left:543.6px;top:1333.86px;font-size:23.2px;line-height:23.2px;color:#111;font-weight:normal;font-family:'Liberation Sans',sans-serif;transform:scaleX(1.1841);transform-origin:0 0;">8&amp;</div>
<div id="t64" class="tx" style="left:681.6px;top:1333.86px;font-size:23.2px;line-height:23.2px;color:#111;font-weight:normal;font-family:'Liberation Sans',sans-serif;transform:scaleX(1.1426);transform-origin:0 0;">8) Turn ½ right stepping L back; &amp;) Turn ½ right stepping R forward</div>
<svg style="position:absolute;left:1135.5px;top:328.25px;" width="377" height="344" viewBox="0 0 377 344"><defs><clipPath id="phc"><rect x="0" y="0" width="377" height="344"/></clipPath></defs><g clip-path="url(#phc)"><rect x="0" y="0" width="377" height="300" fill="#8f8068"/><rect x="0" y="0" width="13" height="300" fill="#c7b184"/><rect x="5.1" y="51" width="2.3" height="250" fill="#4a3e2e" opacity="0.18"/><rect x="2.7" y="-7" width="2.2" height="202" fill="#4a3e2e" opacity="0.24"/><rect x="1.8" y="118" width="3.0" height="314" fill="#4a3e2e" opacity="0.11"/><rect x="6.9" y="54" width="2.5" height="160" fill="#f4ecd8" opacity="0.12"/><rect x="2.7" y="42" width="1.5" height="293" fill="#f4ecd8" opacity="0.23"/><rect x="5.7" y="44" width="2.5" height="197" fill="#f4ecd8" opacity="0.27"/><rect x="10.0" y="24" width="3.5" height="189" fill="#4a3e2e" opacity="0.23"/><rect x="0" y="0" width="1.5" height="300" fill="#3a3026" opacity="0.8"/><rect x="13" y="0" width="27" height="300" fill="#c0ad84"/><rect x="20.6" y="99" width="1.0" height="216" fill="#4a3e2e" opacity="0.17"/><rect x="36.0" y="107" width="3.1" height="230" fill="#f4ecd8" opacity="0.17"/><rect x="36.5" y="89" width="1.9" height="196" fill="#f4ecd8" opacity="0.26"/><rect x="16.0" y="-3" width="1.7" height="192" fill="#4a3e2e" opacity="0.24"/><rect x="16.3" y="58" width="1.0" height="226" fill="#4a3e2e" opacity="0.13"/><rect x="18.4" y="-4" width="2.8" height="222" fill="#f4ecd8" opacity="0.27"/><rect x="18.9" y="23" width="1.5" height="300" fill="#4a3e2e" opacity="0.24"/><rect x="13" y="0" width="1.5" height="300" fill="#3a3026" opacity="0.8"/><rect x="40" y="0" width="28" height="300" fill="#b5a380"/><rect x="46.1" y="-6" width="1.9" height="318" fill="#4a3e2e" opacity="0.22"/><rect x="46.1" y="21" width="1.5" height="162" fill="#4a3e2e" opacity="0.16"/><rect x="43.2" y="32" width="2.4" height="227" fill="#f4ecd8" opacity="0.26"/><rect x="64.0" y="6" width="2.1" height="176" fill="#4a3e2e" opacity="0.26"/><rect x="62.8" y="84" width="3.0" height="310" fill="#f4ecd8" opacity="0.16"/><rect x="45.7" y="39" width="3.4" height="168" fill="#4a3e2e" opacity="0.21"/><rect x="41.9" y="16" width="3.4" height="290" fill="#f4ecd8" opacity="0.28"/><rect x="40" y="0" width="1.5" height="300" fill="#3a3026" opacity="0.8"/><rect x="68" y="0" width="28" height="300" fill="#ab9b7c"/><rect x="83.3" y="-10" width="1.6" height="189" fill="#f4ecd8" opacity="0.29"/><rect x="82.4" y="108" width="3.1" height="185" fill="#4a3e2e" opacity="0.15"/><rect x="69.4" y="5" width="1.5" height="213" fill="#f4ecd8" opacity="0.13"/><rect x="82.7" y="117" width="1.2" height="262" fill="#f4ecd8" opacity="0.32"/><rect x="85.6" y="-17" width="2.4" height="305" fill="#f4ecd8" opacity="0.13"/><rect x="85.8" y="48" width="3.4" height="274" fill="#f4ecd8" opacity="0.27"/><rect x="76.7" y="83" width="3.5" height="303" fill="#f4ecd8" opacity="0.25"/><rect x="68" y="0" width="1.5" height="300" fill="#3a3026" opacity="0.8"/><rect x="96" y="0" width="22" height="300" fill="#a39478"/><rect x="110.3" y="29" width="2.7" height="266" fill="#4a3e2e" opacity="0.26"/><rect x="113.2" y="101" width="3.2" height="247" fill="#f4ecd8" opacity="0.30"/><rect x="108.2" y="-9" width="1.8" height="259" fill="#4a3e2e" opacity="0.21"/><rect x="114.9" y="83" width="3.2" height="249" fill="#4a3e2e" opacity="0.17"/><rect x="104.9" y="-16" width="3.1" height="252" fill="#f4ecd8" opacity="0.29"/><rect x="105.7" y="66" width="1.4" height="306" fill="#4a3e2e" opacity="0.19"/><rect x="101.6" y="8" width="0.8" height="179" fill="#f4ecd8" opacity="0.28"/><rect x="96" y="0" width="1.5" height="300" fill="#3a3026" opacity="0.8"/><rect x="118" y="0" width="28" height="300" fill="#a69880"/><rect x="140.7" y="26" width="2.6" height="263" fill="#f4ecd8" opacity="0.33"/><rect x="123.8" y="103" width="2.0" height="215" fill="#4a3e2e" opacity="0.26"/><rect x="133.0" y="97" width="1.7" height="294" fill="#f4ecd8" opacity="0.23"/><rect x="136.1" y="43" width="3.4" height="197" fill="#f4ecd8" opacity="0.16"/><rect x="124.1" y="24" width="1.9" height="293" fill="#4a3e2e" opacity="0.19"/><rect x="142.6" y="102" width="2.0" height="157" fill="#f4ecd8" opacity="0.13"/><rect x="136.0" y="-17" width="2.3" height="173" fill="#f4ecd8" opacity="0.30"/><rect x="118" y="0" width="1.5" height="300" fill="#3a3026" opacity="0.8"/><rect x="146" y="0" width="32" height="300" fill="#9a8c74"/><rect x="159.7" y="-0" width="0.9" height="158" fill="#4a3e2e" opacity="0.14"/><rect x="164.6" y="93" width="2.0" height="313" fill="#4a3e2e" opacity="0.22"/><rect x="166.2" y="-18" width="1.3" height="230" fill="#f4ecd8" opacity="0.16"/><rect x="167.0" y="78" width="1.3" height="238" fill="#f4ecd8" opacity="0.20"/><rect x="164.2" y="107" width="2.8" height="165" fill="#f4ecd8" opacity="0.30"/><rect x="173.1" y="68" width="2.8" height="305" fill="#f4ecd8" opacity="0.22"/><rect x="157.6" y="112" width="2.3" height="229" fill="#4a3e2e" opacity="0.24"/><rect x="146" y="0" width="1.5" height="300" fill="#3a3026" opacity="0.8"/><rect x="178" y="0" width="32" height="300" fill="#8e816c"/><rect x="197.2" y="70" width="1.4" height="272" fill="#4a3e2e" opacity="0.25"/><rect x="185.0" y="55" width="3.2" height="284" fill="#4a3e2e" opacity="0.28"/><rect x="188.0" y="-8" width="3.3" height="225" fill="#4a3e2e" opacity="0.16"/><rect x="194.4" y="93" width="2.9" height="161" fill="#f4ecd8" opacity="0.13"/><rect x="201.4" y="-0" width="1.3" height="175" fill="#f4ecd8" opacity="0.30"/><rect x="193.5" y="112" width="2.8" height="234" fill="#4a3e2e" opacity="0.22"/><rect x="205.6" y="21" width="1.0" height="274" fill="#f4ecd8" opacity="0.24"/><rect x="178" y="0" width="1.5" height="300" fill="#3a3026" opacity="0.8"/><rect x="210" y="0" width="36" height="300" fill="#948670"/><rect x="231.4" y="24" width="2.2" height="215" fill="#4a3e2e" opacity="0.20"/><rect x="238.0" y="116" width="3.2" height="239" fill="#f4ecd8" opacity="0.32"/><rect x="229.3" y="65" width="1.3" height="155" fill="#f4ecd8" opacity="0.24"/><rect x="242.0" y="59" width="2.2" height="233" fill="#f4ecd8" opacity="0.30"/><rect x="233.1" y="114" width="1.0" height="307" fill="#f4ecd8" opacity="0.22"/><rect x="219.6" y="94" width="2.1" height="303" fill="#f4ecd8" opacity="0.22"/><rect x="226.2" y="110" width="1.7" height="172" fill="#f4ecd8" opacity="0.26"/><rect x="210" y="0" width="1.5" height="300" fill="#3a3026" opacity="0.8"/><rect x="246" y="0" width="38" height="300" fill="#9a8d78"/><rect x="273.5" y="76" width="0.9" height="205" fill="#f4ecd8" opacity="0.17"/><rect x="259.1" y="-3" width="2.5" height="237" fill="#f4ecd8" opacity="0.29"/><rect x="255.5" y="33" width="1.3" height="220" fill="#f4ecd8" opacity="0.22"/><rect x="265.0" y="69" width="1.2" height="240" fill="#f4ecd8" opacity="0.27"/><rect x="275.9" y="84" width="2.5" height="288" fill="#4a3e2e" opacity="0.14"/><rect x="277.7" y="11" width="1.7" height="320" fill="#f4ecd8" opacity="0.33"/><rect x="277.2" y="16" width="1.2" height="166" fill="#f4ecd8" opacity="0.29"/><rect x="246" y="0" width="1.5" height="300" fill="#3a3026" opacity="0.8"/><rect x="284" y="0" width="34" height="300" fill="#8e826e"/><rect x="310.0" y="36" width="1.9" height="266" fill="#4a3e2e" opacity="0.12"/><rect x="285.5" y="116" width="1.3" height="170" fill="#4a3e2e" opacity="0.26"/><rect x="300.2" y="6" width="2.8" height="162" fill="#f4ecd8" opacity="0.28"/><rect x="288.2" y="60" width="0.9" height="175" fill="#4a3e2e" opacity="0.19"/><rect x="290.5" y="110" width="1.4" height="166" fill="#4a3e2e" opacity="0.28"/><rect x="286.9" y="26" width="3.4" height="229" fill="#f4ecd8" opacity="0.30"/><rect x="300.5" y="78" width="2.0" height="294" fill="#4a3e2e" opacity="0.10"/><rect x="284" y="0" width="1.5" height="300" fill="#3a3026" opacity="0.8"/><rect x="318" y="0" width="32" height="300" fill="#8a7e6a"/><rect x="324.1" y="7" width="2.0" height="178" fill="#4a3e2e" opacity="0.17"/><rect x="333.4" y="79" width="0.8" height="296" fill="#4a3e2e" opacity="0.24"/><rect x="336.6" y="118" width="1.9" height="287" fill="#4a3e2e" opacity="0.19"/><rect x="326.2" y="94" width="3.3" height="219" fill="#4a3e2e" opacity="0.24"/><rect x="344.1" y="87" width="3.2" height="219" fill="#4a3e2e" opacity="0.24"/><rect x="339.2" y="-19" width="1.0" height="210" fill="#f4ecd8" opacity="0.23"/><rect x="336.9" y="73" width="2.5" height="207" fill="#f4ecd8" opacity="0.34"/><rect x="318" y="0" width="1.5" height="300" fill="#3a3026" opacity="0.8"/><rect x="350" y="0" width="27" height="300" fill="#7e725e"/><rect x="366.2" y="120" width="2.3" height="259" fill="#f4ecd8" opacity="0.21"/><rect x="367.1" y="66" width="2.9" height="276" fill="#4a3e2e" opacity="0.10"/><rect x="356.9" y="33" width="1.9" height="167" fill="#f4ecd8" opacity="0.16"/><rect x="356.8" y="115" width="3.2" height="247" fill="#4a3e2e" opacity="0.19"/><rect x="373.9" y="64" width="2.5" height="279" fill="#4a3e2e" opacity="0.11"/><rect x="352.0" y="4" width="3.3" height="234" fill="#f4ecd8" opacity="0.23"/><rect x="365.1" y="54" width="1.0" height="252" fill="#4a3e2e" opacity="0.18"/><rect x="350" y="0" width="1.5" height="300" fill="#3a3026" opacity="0.8"/><radialGradient id="gsh" cx="0.5" cy="0.5" r="0.5"><stop offset="0" stop-color="#2e2418" stop-opacity="0.35"/><stop offset="1" stop-color="#2e2418" stop-opacity="0"/></radialGradient><ellipse cx="215" cy="140" rx="45" ry="120" fill="url(#gsh)"/><linearGradient id="fsh" x1="0" x2="1" y1="0" y2="0"><stop offset="0" stop-color="#fff" stop-opacity="0.06"/><stop offset="1" stop-color="#000" stop-opacity="0.12"/></linearGradient><rect x="0" y="0" width="377" height="300" fill="url(#fsh)"/><ellipse cx="38" cy="40" rx="2.5" ry="5" fill="#3e3224" opacity="0.55"/><ellipse cx="50" cy="120" rx="2.5" ry="5" fill="#3e3224" opacity="0.55"/><ellipse cx="64" cy="210" rx="2.5" ry="5" fill="#3e3224" opacity="0.55"/><ellipse cx="118" cy="98" rx="2.5" ry="5" fill="#3e3224" opacity="0.55"/><ellipse cx="150" cy="60" rx="2.5" ry="5" fill="#3e3224" opacity="0.55"/><ellipse cx="236" cy="72" rx="2.5" ry="5" fill="#3e3224" opacity="0.55"/><ellipse cx="252" cy="182" rx="2.5" ry="5" fill="#3e3224" opacity="0.55"/><ellipse cx="322" cy="82" rx="2.5" ry="5" fill="#3e3224" opacity="0.55"/><ellipse cx="334" cy="118" rx="2.5" ry="5" fill="#3e3224" opacity="0.55"/><ellipse cx="366" cy="52" rx="2.5" ry="5" fill="#3e3224" opacity="0.55"/><ellipse cx="288" cy="42" rx="2.5" ry="5" fill="#3e3224" opacity="0.55"/><ellipse cx="200" cy="150" rx="2.5" ry="5" fill="#3e3224" opacity="0.55"/><ellipse cx="110" cy="180" rx="2.5" ry="5" fill="#3e3224" opacity="0.55"/><ellipse cx="300" cy="110" rx="2.5" ry="5" fill="#3e3224" opacity="0.55"/><ellipse cx="355" cy="170" rx="2.5" ry="5" fill="#3e3224" opacity="0.55"/><linearGradient id="gg" x1="0" x2="0" y1="0" y2="1"><stop offset="0" stop-color="#867a62"/><stop offset="0.3" stop-color="#b2ab9a"/><stop offset="0.65" stop-color="#bcb8ae"/><stop offset="1" stop-color="#a49e90"/></linearGradient><path d="M0 219 L94 228 L150 240 L230 262 L300 280 L377 290 V344 H0 Z" fill="url(#gg)"/><radialGradient id="gbr" cx="0.1" cy="0.75" r="0.6"><stop offset="0" stop-color="#6e5a36" stop-opacity="0.55"/><stop offset="1" stop-color="#6e5a36" stop-opacity="0"/></radialGradient><path d="M0 219 L94 228 L150 240 L230 262 L300 280 L377 290 V344 H0 Z" fill="url(#gbr)"/><ellipse cx="137.8" cy="256.9" rx="4.3" ry="1.4" fill="#9c968a" opacity="0.55" transform="rotate(13 137.8 256.9)"/><ellipse cx="291.2" cy="293.5" rx="4.2" ry="1.4" fill="#c8c4ba" opacity="0.55" transform="rotate(-36 291.2 293.5)"/><ellipse cx="118.8" cy="270.5" rx="4.0" ry="1.3" fill="#9c968a" opacity="0.55" transform="rotate(-34 118.8 270.5)"/><ellipse cx="180.1" cy="340.7" rx="2.5" ry="0.8" fill="#c8c4ba" opacity="0.55" transform="rotate(-28 180.1 340.7)"/><ellipse cx="58.3" cy="266.3" rx="2.0" ry="0.7" fill="#6e5c40" opacity="0.6" transform="rotate(-19 58.3 266.3)"/><ellipse cx="219.5" cy="273.2" rx="4.8" ry="1.6" fill="#e2dfd8" opacity="0.55" transform="rotate(36 219.5 273.2)"/><ellipse cx="42.9" cy="330.9" rx="4.8" ry="1.6" fill="#9c968a" opacity="0.55" transform="rotate(-18 42.9 330.9)"/><ellipse cx="229.9" cy="310.5" rx="4.5" ry="1.5" fill="#4a3c28" opacity="0.6" transform="rotate(20 229.9 310.5)"/><ellipse cx="71.6" cy="252.4" rx="5.7" ry="1.9" fill="#d6d3cb" opacity="0.55" transform="rotate(10 71.6 252.4)"/><ellipse cx="3.6" cy="253.7" rx="1.6" ry="0.5" fill="#5a4a32" opacity="0.6" transform="rotate(3 3.6 253.7)"/><ellipse cx="27.3" cy="232.5" rx="4.4" ry="1.5" fill="#6e5c40" opacity="0.6" transform="rotate(39 27.3 232.5)"/><ellipse cx="182.5" cy="265.2" rx="2.9" ry="1.0" fill="#e2dfd8" opacity="0.55" transform="rotate(27 182.5 265.2)"/><ellipse cx="28.0" cy="236.6" rx="4.9" ry="1.6" fill="#e2dfd8" opacity="0.55" transform="rotate(-4 28.0 236.6)"/><ellipse cx="56.8" cy="240.7" rx="5.1" ry="1.7" fill="#9c968a" opacity="0.55" transform="rotate(4 56.8 240.7)"/><ellipse cx="281.3" cy="334.3" rx="3.3" ry="1.1" fill="#d6d3cb" opacity="0.55" transform="rotate(-3 281.3 334.3)"/><ellipse cx="122.2" cy="288.3" rx="3.3" ry="1.1" fill="#c8c4ba" opacity="0.55" transform="rotate(-16 122.2 288.3)"/><ellipse cx="80.4" cy="302.8" rx="1.8" ry="0.6" fill="#6e5c40" opacity="0.6" transform="rotate(21 80.4 302.8)"/><ellipse cx="123.6" cy="329.6" rx="2.4" ry="0.8" fill="#9c968a" opacity="0.55" transform="rotate(-11 123.6 329.6)"/><ellipse cx="44.3" cy="308.5" rx="3.9" ry="1.3" fill="#9c968a" opacity="0.55" transform="rotate(-5 44.3 308.5)"/><ellipse cx="119.7" cy="270.8" rx="5.5" ry="1.8" fill="#e2dfd8" opacity="0.55" transform="rotate(-33 119.7 270.8)"/><ellipse cx="255.2" cy="293.3" rx="4.9" ry="1.6" fill="#9c968a" opacity="0.55" transform="rotate(24 255.2 293.3)"/><ellipse cx="203.8" cy="324.0" rx="3.9" ry="1.3" fill="#4a3c28" opacity="0.6" transform="rotate(30 203.8 324.0)"/><ellipse cx="194.4" cy="288.4" rx="3.9" ry="1.3" fill="#c8c4ba" opacity="0.55" transform="rotate(-35 194.4 288.4)"/><ellipse cx="206.1" cy="318.1" rx="1.8" ry="0.6" fill="#6e5c40" opacity="0.6" transform="rotate(-32 206.1 318.1)"/><ellipse cx="268.5" cy="281.7" rx="5.4" ry="1.8" fill="#4a3c28" opacity="0.6" transform="rotate(-8 268.5 281.7)"/><ellipse cx="127.4" cy="340.1" rx="4.3" ry="1.4" fill="#6e5c40" opacity="0.6" transform="rotate(24 127.4 340.1)"/><ellipse cx="27.3" cy="297.4" rx="1.6" ry="0.5" fill="#9c968a" opacity="0.55" transform="rotate(28 27.3 297.4)"/><ellipse cx="303.8" cy="323.7" rx="5.3" ry="1.8" fill="#d6d3cb" opacity="0.55" transform="rotate(2 303.8 323.7)"/><ellipse cx="267.7" cy="319.9" rx="3.3" ry="1.1" fill="#e2dfd8" opacity="0.55" transform="rotate(-20 267.7 319.9)"/><ellipse cx="61.2" cy="299.5" rx="4.4" ry="1.5" fill="#4a3c28" opacity="0.6" transform="rotate(-6 61.2 299.5)"/><ellipse cx="110.1" cy="340.3" rx="1.7" ry="0.6" fill="#5a4a32" opacity="0.6" transform="rotate(-16 110.1 340.3)"/><ellipse cx="58.6" cy="334.2" rx="5.4" ry="1.8" fill="#d6d3cb" opacity="0.55" transform="rotate(7 58.6 334.2)"/><ellipse cx="41.0" cy="244.5" rx="2.4" ry="0.8" fill="#6e5c40" opacity="0.6" transform="rotate(-2 41.0 244.5)"/><ellipse cx="191.7" cy="275.9" rx="5.3" ry="1.8" fill="#4a3c28" opacity="0.6" transform="rotate(10 191.7 275.9)"/><ellipse cx="355.1" cy="289.2" rx="5.1" ry="1.7" fill="#c8c4ba" opacity="0.55" transform="rotate(33 355.1 289.2)"/><ellipse cx="129.0" cy="288.8" rx="5.6" ry="1.9" fill="#5a4a32" opacity="0.6" transform="rotate(-8 129.0 288.8)"/><ellipse cx="82.0" cy="238.4" rx="4.9" ry="1.6" fill="#9c968a" opacity="0.55" transform="rotate(23 82.0 238.4)"/><ellipse cx="21.8" cy="334.8" rx="5.3" ry="1.8" fill="#9c968a" opacity="0.55" transform="rotate(-4 21.8 334.8)"/><ellipse cx="93.0" cy="273.4" rx="5.2" ry="1.7" fill="#4a3c28" opacity="0.6" transform="rotate(-28 93.0 273.4)"/><ellipse cx="342.4" cy="320.8" rx="2.0" ry="0.7" fill="#9c968a" opacity="0.55" transform="rotate(1 342.4 320.8)"/><ellipse cx="20.0" cy="291.8" rx="2.2" ry="0.7" fill="#5a4a32" opacity="0.6" transform="rotate(26 20.0 291.8)"/><ellipse cx="31.1" cy="254.9" rx="4.5" ry="1.5" fill="#4a3c28" opacity="0.6" transform="rotate(15 31.1 254.9)"/><ellipse cx="31.2" cy="313.3" rx="3.8" ry="1.3" fill="#5a4a32" opacity="0.6" transform="rotate(23 31.2 313.3)"/><ellipse cx="157.2" cy="333.8" rx="1.8" ry="0.6" fill="#e2dfd8" opacity="0.55" transform="rotate(-37 157.2 333.8)"/><ellipse cx="155.8" cy="282.3" rx="5.5" ry="1.8" fill="#9c968a" opacity="0.55" transform="rotate(-15 155.8 282.3)"/><ellipse cx="28.7" cy="259.3" rx="3.5" ry="1.2" fill="#9c968a" opacity="0.55" transform="rotate(-34 28.7 259.3)"/><ellipse cx="53.0" cy="303.5" rx="4.4" ry="1.5" fill="#d6d3cb" opacity="0.55" transform="rotate(12 53.0 303.5)"/><ellipse cx="4.7" cy="268.0" rx="4.5" ry="1.5" fill="#6e5c40" opacity="0.6" transform="rotate(-31 4.7 268.0)"/><ellipse cx="291.0" cy="326.4" rx="5.1" ry="1.7" fill="#e2dfd8" opacity="0.55" transform="rotate(-17 291.0 326.4)"/><ellipse cx="141.7" cy="287.9" rx="2.7" ry="0.9" fill="#4a3c28" opacity="0.6" transform="rotate(4 141.7 287.9)"/><ellipse cx="32.8" cy="245.0" rx="3.1" ry="1.0" fill="#4a3c28" opacity="0.6" transform="rotate(36 32.8 245.0)"/><ellipse cx="212.2" cy="310.3" rx="2.9" ry="1.0" fill="#d6d3cb" opacity="0.55" transform="rotate(-32 212.2 310.3)"/><ellipse cx="174.6" cy="307.9" rx="1.9" ry="0.6" fill="#5a4a32" opacity="0.6" transform="rotate(-5 174.6 307.9)"/><ellipse cx="310.4" cy="335.1" rx="2.0" ry="0.7" fill="#5a4a32" opacity="0.6" transform="rotate(26 310.4 335.1)"/><ellipse cx="145.5" cy="262.4" rx="3.2" ry="1.1" fill="#4a3c28" opacity="0.6" transform="rotate(9 145.5 262.4)"/><ellipse cx="119.8" cy="318.2" rx="2.5" ry="0.8" fill="#d6d3cb" opacity="0.55" transform="rotate(-19 119.8 318.2)"/><ellipse cx="71.2" cy="259.4" rx="3.3" ry="1.1" fill="#5a4a32" opacity="0.6" transform="rotate(1 71.2 259.4)"/><ellipse cx="297.3" cy="322.7" rx="4.1" ry="1.4" fill="#6e5c40" opacity="0.6" transform="rotate(32 297.3 322.7)"/><ellipse cx="206.7" cy="265.0" rx="3.6" ry="1.2" fill="#6e5c40" opacity="0.6" transform="rotate(-24 206.7 265.0)"/><ellipse cx="351.9" cy="343.8" rx="4.5" ry="1.5" fill="#d6d3cb" opacity="0.55" transform="rotate(10 351.9 343.8)"/><ellipse cx="92.2" cy="292.3" rx="4.5" ry="1.5" fill="#4a3c28" opacity="0.6" transform="rotate(-19 92.2 292.3)"/><ellipse cx="214.6" cy="288.6" rx="1.7" ry="0.6" fill="#e2dfd8" opacity="0.55" transform="rotate(33 214.6 288.6)"/><ellipse cx="374.0" cy="321.7" rx="4.0" ry="1.3" fill="#5a4a32" opacity="0.6" transform="rotate(-17 374.0 321.7)"/><ellipse cx="216.2" cy="323.4" rx="2.2" ry="0.7" fill="#d6d3cb" opacity="0.55" transform="rotate(-4 216.2 323.4)"/><ellipse cx="152.1" cy="317.5" rx="5.5" ry="1.8" fill="#e2dfd8" opacity="0.55" transform="rotate(-15 152.1 317.5)"/><ellipse cx="253.1" cy="312.0" rx="3.1" ry="1.0" fill="#d6d3cb" opacity="0.55" transform="rotate(-27 253.1 312.0)"/><ellipse cx="153.0" cy="263.0" rx="2.0" ry="0.7" fill="#4a3c28" opacity="0.6" transform="rotate(-36 153.0 263.0)"/><ellipse cx="295.6" cy="310.0" rx="4.8" ry="1.6" fill="#c8c4ba" opacity="0.55" transform="rotate(8 295.6 310.0)"/><ellipse cx="177.2" cy="272.2" rx="4.1" ry="1.4" fill="#c8c4ba" opacity="0.55" transform="rotate(20 177.2 272.2)"/><ellipse cx="183.1" cy="343.3" rx="5.1" ry="1.7" fill="#c8c4ba" opacity="0.55" transform="rotate(26 183.1 343.3)"/><ellipse cx="44.2" cy="236.0" rx="5.5" ry="1.8" fill="#6e5c40" opacity="0.6" transform="rotate(-5 44.2 236.0)"/><ellipse cx="20.6" cy="310.5" rx="5.3" ry="1.8" fill="#9c968a" opacity="0.55" transform="rotate(20 20.6 310.5)"/><ellipse cx="114.9" cy="294.4" rx="1.7" ry="0.6" fill="#4a3c28" opacity="0.6" transform="rotate(-21 114.9 294.4)"/><ellipse cx="329.1" cy="340.7" rx="3.5" ry="1.2" fill="#5a4a32" opacity="0.6" transform="rotate(4 329.1 340.7)"/><ellipse cx="247.6" cy="336.7" rx="5.2" ry="1.7" fill="#9c968a" opacity="0.55" transform="rotate(29 247.6 336.7)"/><ellipse cx="158.9" cy="320.2" rx="2.4" ry="0.8" fill="#d6d3cb" opacity="0.55" transform="rotate(32 158.9 320.2)"/><ellipse cx="37.2" cy="318.7" rx="2.0" ry="0.7" fill="#4a3c28" opacity="0.6" transform="rotate(-40 37.2 318.7)"/><ellipse cx="92.0" cy="258.5" rx="2.8" ry="0.9" fill="#4a3c28" opacity="0.6" transform="rotate(25 92.0 258.5)"/><ellipse cx="149.8" cy="265.5" rx="4.0" ry="1.3" fill="#5a4a32" opacity="0.6" transform="rotate(-4 149.8 265.5)"/><ellipse cx="118.3" cy="261.6" rx="2.1" ry="0.7" fill="#c8c4ba" opacity="0.55" transform="rotate(30 118.3 261.6)"/><ellipse cx="76.4" cy="326.8" rx="4.4" ry="1.5" fill="#4a3c28" opacity="0.6" transform="rotate(27 76.4 326.8)"/><ellipse cx="133.5" cy="279.6" rx="2.2" ry="0.7" fill="#e2dfd8" opacity="0.55" transform="rotate(3 133.5 279.6)"/><ellipse cx="89.1" cy="337.8" rx="5.7" ry="1.9" fill="#9c968a" opacity="0.55" transform="rotate(18 89.1 337.8)"/><ellipse cx="118.0" cy="331.8" rx="5.2" ry="1.7" fill="#e2dfd8" opacity="0.55" transform="rotate(-13 118.0 331.8)"/><ellipse cx="360.8" cy="317.0" rx="3.2" ry="1.1" fill="#4a3c28" opacity="0.6" transform="rotate(-30 360.8 317.0)"/><ellipse cx="271.5" cy="283.2" rx="2.7" ry="0.9" fill="#6e5c40" opacity="0.6" transform="rotate(2 271.5 283.2)"/><ellipse cx="43.6" cy="284.9" rx="5.7" ry="1.9" fill="#e2dfd8" opacity="0.55" transform="rotate(13 43.6 284.9)"/><ellipse cx="104.4" cy="300.1" rx="1.8" ry="0.6" fill="#c8c4ba" opacity="0.55" transform="rotate(33 104.4 300.1)"/><ellipse cx="27.8" cy="332.7" rx="1.5" ry="0.5" fill="#6e5c40" opacity="0.6" transform="rotate(-20 27.8 332.7)"/><ellipse cx="107.5" cy="314.2" rx="2.5" ry="0.8" fill="#6e5c40" opacity="0.6" transform="rotate(-38 107.5 314.2)"/><ellipse cx="338.5" cy="297.9" rx="5.4" ry="1.8" fill="#d6d3cb" opacity="0.55" transform="rotate(34 338.5 297.9)"/><ellipse cx="209.6" cy="300.7" rx="3.0" ry="1.0" fill="#d6d3cb" opacity="0.55" transform="rotate(1 209.6 300.7)"/><ellipse cx="190.6" cy="325.1" rx="4.4" ry="1.5" fill="#e2dfd8" opacity="0.55" transform="rotate(8 190.6 325.1)"/><ellipse cx="164.2" cy="303.5" rx="3.8" ry="1.3" fill="#6e5c40" opacity="0.6" transform="rotate(23 164.2 303.5)"/><ellipse cx="88.9" cy="281.7" rx="2.4" ry="0.8" fill="#c8c4ba" opacity="0.55" transform="rotate(-19 88.9 281.7)"/><ellipse cx="76.3" cy="340.4" rx="1.7" ry="0.6" fill="#5a4a32" opacity="0.6" transform="rotate(-14 76.3 340.4)"/><ellipse cx="229.3" cy="296.2" rx="4.9" ry="1.6" fill="#9c968a" opacity="0.55" transform="rotate(29 229.3 296.2)"/><ellipse cx="11.7" cy="235.9" rx="2.2" ry="0.7" fill="#e2dfd8" opacity="0.55" transform="rotate(10 11.7 235.9)"/><ellipse cx="20.4" cy="273.9" rx="4.4" ry="1.5" fill="#9c968a" opacity="0.55" transform="rotate(21 20.4 273.9)"/><ellipse cx="187.9" cy="301.3" rx="3.6" ry="1.2" fill="#5a4a32" opacity="0.6" transform="rotate(-27 187.9 301.3)"/><ellipse cx="260.4" cy="323.4" rx="4.8" ry="1.6" fill="#4a3c28" opacity="0.6" transform="rotate(-3 260.4 323.4)"/><ellipse cx="263.4" cy="307.9" rx="5.6" ry="1.9" fill="#6e5c40" opacity="0.6" transform="rotate(39 263.4 307.9)"/><ellipse cx="54.5" cy="277.5" rx="4.7" ry="1.6" fill="#5a4a32" opacity="0.6" transform="rotate(-7 54.5 277.5)"/><ellipse cx="209.6" cy="279.6" rx="5.5" ry="1.8" fill="#e2dfd8" opacity="0.55" transform="rotate(-16 209.6 279.6)"/><ellipse cx="44.8" cy="326.4" rx="3.2" ry="1.1" fill="#5a4a32" opacity="0.6" transform="rotate(-11 44.8 326.4)"/><ellipse cx="127.1" cy="341.7" rx="4.1" ry="1.4" fill="#4a3c28" opacity="0.6" transform="rotate(7 127.1 341.7)"/><ellipse cx="375.0" cy="312.0" rx="3.9" ry="1.3" fill="#e2dfd8" opacity="0.55" transform="rotate(-3 375.0 312.0)"/><ellipse cx="148.1" cy="324.9" rx="3.1" ry="1.0" fill="#e2dfd8" opacity="0.55" transform="rotate(-7 148.1 324.9)"/><ellipse cx="92.9" cy="318.8" rx="4.9" ry="1.6" fill="#4a3c28" opacity="0.6" transform="rotate(-23 92.9 318.8)"/><ellipse cx="176.3" cy="259.6" rx="3.4" ry="1.1" fill="#e2dfd8" opacity="0.55" transform="rotate(29 176.3 259.6)"/><ellipse cx="77.1" cy="268.7" rx="1.8" ry="0.6" fill="#9c968a" opacity="0.55" transform="rotate(36 77.1 268.7)"/><ellipse cx="234.1" cy="285.3" rx="4.6" ry="1.5" fill="#e2dfd8" opacity="0.55" transform="rotate(-19 234.1 285.3)"/><ellipse cx="288.7" cy="310.3" rx="5.4" ry="1.8" fill="#4a3c28" opacity="0.6" transform="rotate(27 288.7 310.3)"/><ellipse cx="169.6" cy="326.3" rx="3.1" ry="1.0" fill="#6e5c40" opacity="0.6" transform="rotate(14 169.6 326.3)"/><ellipse cx="113.9" cy="296.2" rx="3.6" ry="1.2" fill="#6e5c40" opacity="0.6" transform="rotate(8 113.9 296.2)"/><ellipse cx="12.0" cy="260.1" rx="3.3" ry="1.1" fill="#5a4a32" opacity="0.6" transform="rotate(1 12.0 260.1)"/><ellipse cx="206.7" cy="260.3" rx="3.4" ry="1.1" fill="#5a4a32" opacity="0.6" transform="rotate(27 206.7 260.3)"/><ellipse cx="201.7" cy="276.8" rx="2.0" ry="0.7" fill="#9c968a" opacity="0.55" transform="rotate(-22 201.7 276.8)"/><ellipse cx="110.1" cy="264.1" rx="2.4" ry="0.8" fill="#5a4a32" opacity="0.6" transform="rotate(20 110.1 264.1)"/><ellipse cx="287.1" cy="312.7" rx="4.3" ry="1.4" fill="#5a4a32" opacity="0.6" transform="rotate(5 287.1 312.7)"/><ellipse cx="185.8" cy="281.8" rx="5.5" ry="1.8" fill="#6e5c40" opacity="0.6" transform="rotate(-18 185.8 281.8)"/><ellipse cx="59.8" cy="271.1" rx="3.5" ry="1.2" fill="#6e5c40" opacity="0.6" transform="rotate(17 59.8 271.1)"/><ellipse cx="196.2" cy="312.6" rx="5.4" ry="1.8" fill="#c8c4ba" opacity="0.55" transform="rotate(7 196.2 312.6)"/><ellipse cx="264.4" cy="289.5" rx="4.5" ry="1.5" fill="#4a3c28" opacity="0.6" transform="rotate(-30 264.4 289.5)"/><ellipse cx="343.0" cy="333.3" rx="2.6" ry="0.9" fill="#9c968a" opacity="0.55" transform="rotate(-2 343.0 333.3)"/><ellipse cx="122.7" cy="252.9" rx="1.5" ry="0.5" fill="#4a3c28" opacity="0.6" transform="rotate(5 122.7 252.9)"/><ellipse cx="98.7" cy="303.5" rx="2.2" ry="0.7" fill="#6e5c40" opacity="0.6" transform="rotate(-13 98.7 303.5)"/><ellipse cx="28.5" cy="227.8" rx="3.8" ry="1.3" fill="#5a4a32" opacity="0.6" transform="rotate(-18 28.5 227.8)"/><ellipse cx="312.8" cy="329.3" rx="3.1" ry="1.0" fill="#d6d3cb" opacity="0.55" transform="rotate(24 312.8 329.3)"/><ellipse cx="186.6" cy="279.7" rx="1.5" ry="0.5" fill="#9c968a" opacity="0.55" transform="rotate(-22 186.6 279.7)"/><ellipse cx="0.4" cy="288.3" rx="3.1" ry="1.0" fill="#4a3c28" opacity="0.6" transform="rotate(28 0.4 288.3)"/><ellipse cx="310.4" cy="329.9" rx="4.4" ry="1.5" fill="#9c968a" opacity="0.55" transform="rotate(-12 310.4 329.9)"/><ellipse cx="269.9" cy="306.8" rx="4.4" ry="1.5" fill="#e2dfd8" opacity="0.55" transform="rotate(-27 269.9 306.8)"/><ellipse cx="234.3" cy="281.9" rx="3.9" ry="1.3" fill="#4a3c28" opacity="0.6" transform="rotate(-11 234.3 281.9)"/><ellipse cx="251.8" cy="282.8" rx="4.2" ry="1.4" fill="#6e5c40" opacity="0.6" transform="rotate(-26 251.8 282.8)"/><ellipse cx="23.8" cy="230.4" rx="1.9" ry="0.6" fill="#d6d3cb" opacity="0.55" transform="rotate(28 23.8 230.4)"/><ellipse cx="193.2" cy="304.9" rx="1.6" ry="0.5" fill="#c8c4ba" opacity="0.55" transform="rotate(30 193.2 304.9)"/><ellipse cx="20.1" cy="253.0" rx="3.6" ry="1.2" fill="#c8c4ba" opacity="0.55" transform="rotate(-20 20.1 253.0)"/><ellipse cx="239.3" cy="266.9" rx="4.4" ry="1.5" fill="#5a4a32" opacity="0.6" transform="rotate(27 239.3 266.9)"/><ellipse cx="312.4" cy="291.2" rx="3.3" ry="1.1" fill="#9c968a" opacity="0.55" transform="rotate(24 312.4 291.2)"/><ellipse cx="47.2" cy="268.0" rx="4.3" ry="1.4" fill="#5a4a32" opacity="0.6" transform="rotate(38 47.2 268.0)"/><ellipse cx="177.9" cy="306.6" rx="4.9" ry="1.6" fill="#9c968a" opacity="0.55" transform="rotate(15 177.9 306.6)"/><ellipse cx="158.1" cy="299.0" rx="3.2" ry="1.1" fill="#e2dfd8" opacity="0.55" transform="rotate(-36 158.1 299.0)"/><ellipse cx="16.0" cy="256.9" rx="4.6" ry="1.5" fill="#d6d3cb" opacity="0.55" transform="rotate(-8 16.0 256.9)"/><ellipse cx="341.1" cy="323.6" rx="5.1" ry="1.7" fill="#5a4a32" opacity="0.6" transform="rotate(-15 341.1 323.6)"/><ellipse cx="301.8" cy="324.3" rx="2.7" ry="0.9" fill="#c8c4ba" opacity="0.55" transform="rotate(21 301.8 324.3)"/><ellipse cx="261.7" cy="288.6" rx="4.9" ry="1.6" fill="#5a4a32" opacity="0.6" transform="rotate(27 261.7 288.6)"/><ellipse cx="209.7" cy="331.4" rx="5.2" ry="1.7" fill="#e2dfd8" opacity="0.55" transform="rotate(-14 209.7 331.4)"/><ellipse cx="7.3" cy="291.0" rx="2.1" ry="0.7" fill="#4a3c28" opacity="0.6" transform="rotate(-14 7.3 291.0)"/><ellipse cx="30.5" cy="246.5" rx="3.8" ry="1.3" fill="#5a4a32" opacity="0.6" transform="rotate(-35 30.5 246.5)"/><ellipse cx="29.6" cy="244.3" rx="3.5" ry="1.2" fill="#e2dfd8" opacity="0.55" transform="rotate(39 29.6 244.3)"/><ellipse cx="132.5" cy="290.3" rx="3.8" ry="1.3" fill="#6e5c40" opacity="0.6" transform="rotate(13 132.5 290.3)"/><ellipse cx="354.0" cy="327.5" rx="5.7" ry="1.9" fill="#d6d3cb" opacity="0.55" transform="rotate(-26 354.0 327.5)"/><ellipse cx="10.1" cy="242.6" rx="2.0" ry="0.7" fill="#4a3c28" opacity="0.6" transform="rotate(-38 10.1 242.6)"/><ellipse cx="175.6" cy="330.1" rx="1.7" ry="0.6" fill="#6e5c40" opacity="0.6" transform="rotate(-19 175.6 330.1)"/><ellipse cx="92.4" cy="334.8" rx="3.6" ry="1.2" fill="#6e5c40" opacity="0.6" transform="rotate(26 92.4 334.8)"/><ellipse cx="289.4" cy="342.3" rx="1.9" ry="0.6" fill="#c8c4ba" opacity="0.55" transform="rotate(27 289.4 342.3)"/><ellipse cx="154.0" cy="331.7" rx="4.1" ry="1.4" fill="#5a4a32" opacity="0.6" transform="rotate(-22 154.0 331.7)"/><ellipse cx="146.4" cy="267.1" rx="4.3" ry="1.4" fill="#9c968a" opacity="0.55" transform="rotate(10 146.4 267.1)"/><ellipse cx="169.6" cy="260.1" rx="1.7" ry="0.6" fill="#d6d3cb" opacity="0.55" transform="rotate(-19 169.6 260.1)"/><ellipse cx="80.5" cy="244.0" rx="1.6" ry="0.5" fill="#4a3c28" opacity="0.6" transform="rotate(14 80.5 244.0)"/><ellipse cx="66.8" cy="234.9" rx="2.1" ry="0.7" fill="#4a3c28" opacity="0.6" transform="rotate(-38 66.8 234.9)"/><ellipse cx="35.7" cy="338.0" rx="5.1" ry="1.7" fill="#d6d3cb" opacity="0.55" transform="rotate(30 35.7 338.0)"/><ellipse cx="121.0" cy="314.0" rx="1.9" ry="0.6" fill="#c8c4ba" opacity="0.55" transform="rotate(-2 121.0 314.0)"/><ellipse cx="294.2" cy="330.3" rx="5.0" ry="1.7" fill="#4a3c28" opacity="0.6" transform="rotate(36 294.2 330.3)"/><ellipse cx="121.5" cy="244.4" rx="3.0" ry="1.0" fill="#e2dfd8" opacity="0.55" transform="rotate(18 121.5 244.4)"/><ellipse cx="249.8" cy="333.1" rx="1.7" ry="0.6" fill="#9c968a" opacity="0.55" transform="rotate(31 249.8 333.1)"/><ellipse cx="322.8" cy="298.7" rx="3.6" ry="1.2" fill="#d6d3cb" opacity="0.55" transform="rotate(-30 322.8 298.7)"/><ellipse cx="278.5" cy="312.8" rx="3.3" ry="1.1" fill="#c8c4ba" opacity="0.55" transform="rotate(0 278.5 312.8)"/><ellipse cx="141.5" cy="288.0" rx="1.6" ry="0.5" fill="#c8c4ba" opacity="0.55" transform="rotate(-4 141.5 288.0)"/><ellipse cx="223.7" cy="294.5" rx="5.5" ry="1.8" fill="#4a3c28" opacity="0.6" transform="rotate(-14 223.7 294.5)"/><ellipse cx="96.5" cy="298.0" rx="2.3" ry="0.8" fill="#6e5c40" opacity="0.6" transform="rotate(-8 96.5 298.0)"/><ellipse cx="88.3" cy="324.5" rx="4.2" ry="1.4" fill="#d6d3cb" opacity="0.55" transform="rotate(24 88.3 324.5)"/><ellipse cx="192.9" cy="343.2" rx="1.7" ry="0.6" fill="#9c968a" opacity="0.55" transform="rotate(-20 192.9 343.2)"/><ellipse cx="304.3" cy="277.4" rx="3.8" ry="1.3" fill="#e2dfd8" opacity="0.55" transform="rotate(-1 304.3 277.4)"/><ellipse cx="40.4" cy="275.7" rx="4.7" ry="1.6" fill="#d6d3cb" opacity="0.55" transform="rotate(24 40.4 275.7)"/><ellipse cx="322.4" cy="316.0" rx="3.8" ry="1.3" fill="#e2dfd8" opacity="0.55" transform="rotate(25 322.4 316.0)"/><ellipse cx="67.3" cy="262.7" rx="5.5" ry="1.8" fill="#e2dfd8" opacity="0.55" transform="rotate(27 67.3 262.7)"/><ellipse cx="44.3" cy="244.2" rx="3.1" ry="1.0" fill="#c8c4ba" opacity="0.55" transform="rotate(32 44.3 244.2)"/><ellipse cx="27.1" cy="342.5" rx="2.3" ry="0.8" fill="#e2dfd8" opacity="0.55" transform="rotate(5 27.1 342.5)"/><ellipse cx="307.8" cy="307.4" rx="5.1" ry="1.7" fill="#e2dfd8" opacity="0.55" transform="rotate(16 307.8 307.4)"/><ellipse cx="68.1" cy="237.6" rx="4.4" ry="1.5" fill="#5a4a32" opacity="0.6" transform="rotate(-18 68.1 237.6)"/><ellipse cx="97.5" cy="264.0" rx="4.1" ry="1.4" fill="#5a4a32" opacity="0.6" transform="rotate(40 97.5 264.0)"/><ellipse cx="260.8" cy="311.8" rx="3.0" ry="1.0" fill="#4a3c28" opacity="0.6" transform="rotate(-24 260.8 311.8)"/><ellipse cx="26.9" cy="254.4" rx="3.1" ry="1.0" fill="#4a3c28" opacity="0.6" transform="rotate(-3 26.9 254.4)"/><ellipse cx="190.9" cy="336.9" rx="2.9" ry="1.0" fill="#e2dfd8" opacity="0.55" transform="rotate(-1 190.9 336.9)"/><ellipse cx="44.3" cy="237.0" rx="5.2" ry="1.7" fill="#d6d3cb" opacity="0.55" transform="rotate(14 44.3 237.0)"/><ellipse cx="171.5" cy="335.9" rx="3.1" ry="1.0" fill="#e2dfd8" opacity="0.55" transform="rotate(-4 171.5 335.9)"/><ellipse cx="24.2" cy="273.1" rx="2.7" ry="0.9" fill="#4a3c28" opacity="0.6" transform="rotate(-17 24.2 273.1)"/><ellipse cx="262.0" cy="304.0" rx="2.5" ry="0.8" fill="#e2dfd8" opacity="0.55" transform="rotate(7 262.0 304.0)"/><ellipse cx="331.8" cy="315.8" rx="1.9" ry="0.6" fill="#c8c4ba" opacity="0.55" transform="rotate(32 331.8 315.8)"/><ellipse cx="33.3" cy="266.4" rx="3.1" ry="1.0" fill="#9c968a" opacity="0.55" transform="rotate(39 33.3 266.4)"/><ellipse cx="307.5" cy="328.5" rx="4.3" ry="1.4" fill="#5a4a32" opacity="0.6" transform="rotate(-11 307.5 328.5)"/><ellipse cx="175.2" cy="260.6" rx="4.3" ry="1.4" fill="#e2dfd8" opacity="0.55" transform="rotate(38 175.2 260.6)"/><ellipse cx="312.4" cy="301.3" rx="4.5" ry="1.5" fill="#d6d3cb" opacity="0.55" transform="rotate(40 312.4 301.3)"/><ellipse cx="247.4" cy="318.4" rx="5.5" ry="1.8" fill="#e2dfd8" opacity="0.55" transform="rotate(-0 247.4 318.4)"/><ellipse cx="313.0" cy="284.9" rx="1.9" ry="0.6" fill="#d6d3cb" opacity="0.55" transform="rotate(-27 313.0 284.9)"/><ellipse cx="244.7" cy="298.0" rx="4.6" ry="1.5" fill="#6e5c40" opacity="0.6" transform="rotate(-2 244.7 298.0)"/><ellipse cx="58.7" cy="267.3" rx="3.0" ry="1.0" fill="#d6d3cb" opacity="0.55" transform="rotate(-31 58.7 267.3)"/><ellipse cx="155.7" cy="290.5" rx="5.6" ry="1.9" fill="#d6d3cb" opacity="0.55" transform="rotate(-16 155.7 290.5)"/><ellipse cx="33.3" cy="284.5" rx="2.7" ry="0.9" fill="#e2dfd8" opacity="0.55" transform="rotate(7 33.3 284.5)"/><ellipse cx="175.8" cy="342.8" rx="4.0" ry="1.3" fill="#5a4a32" opacity="0.6" transform="rotate(-3 175.8 342.8)"/><ellipse cx="153.2" cy="296.7" rx="5.2" ry="1.7" fill="#c8c4ba" opacity="0.55" transform="rotate(26 153.2 296.7)"/><ellipse cx="86.3" cy="319.3" rx="1.9" ry="0.6" fill="#c8c4ba" opacity="0.55" transform="rotate(-27 86.3 319.3)"/><ellipse cx="41.6" cy="258.7" rx="5.6" ry="1.9" fill="#d6d3cb" opacity="0.55" transform="rotate(-9 41.6 258.7)"/><ellipse cx="112.9" cy="248.2" rx="3.8" ry="1.3" fill="#c8c4ba" opacity="0.55" transform="rotate(-14 112.9 248.2)"/><ellipse cx="184.4" cy="301.8" rx="5.3" ry="1.8" fill="#d6d3cb" opacity="0.55" transform="rotate(-8 184.4 301.8)"/><ellipse cx="112.9" cy="312.2" rx="2.6" ry="0.9" fill="#4a3c28" opacity="0.6" transform="rotate(23 112.9 312.2)"/><ellipse cx="145.0" cy="301.1" rx="2.9" ry="1.0" fill="#4a3c28" opacity="0.6" transform="rotate(27 145.0 301.1)"/><ellipse cx="23.3" cy="286.4" rx="3.8" ry="1.3" fill="#5a4a32" opacity="0.6" transform="rotate(14 23.3 286.4)"/><ellipse cx="135.6" cy="338.0" rx="3.7" ry="1.2" fill="#d6d3cb" opacity="0.55" transform="rotate(-10 135.6 338.0)"/><ellipse cx="92.9" cy="339.5" rx="4.4" ry="1.5" fill="#e2dfd8" opacity="0.55" transform="rotate(9 92.9 339.5)"/><ellipse cx="187.6" cy="285.0" rx="4.7" ry="1.6" fill="#5a4a32" opacity="0.6" transform="rotate(-23 187.6 285.0)"/><ellipse cx="222.2" cy="320.5" rx="5.5" ry="1.8" fill="#9c968a" opacity="0.55" transform="rotate(-8 222.2 320.5)"/><ellipse cx="107.7" cy="304.9" rx="1.8" ry="0.6" fill="#9c968a" opacity="0.55" transform="rotate(-14 107.7 304.9)"/><ellipse cx="119.6" cy="322.0" rx="4.8" ry="1.6" fill="#d6d3cb" opacity="0.55" transform="rotate(40 119.6 322.0)"/><ellipse cx="184.9" cy="270.2" rx="1.8" ry="0.6" fill="#4a3c28" opacity="0.6" transform="rotate(11 184.9 270.2)"/><ellipse cx="8.4" cy="336.0" rx="4.7" ry="1.6" fill="#5a4a32" opacity="0.6" transform="rotate(26 8.4 336.0)"/><ellipse cx="180.6" cy="262.9" rx="4.1" ry="1.4" fill="#d6d3cb" opacity="0.55" transform="rotate(-26 180.6 262.9)"/><ellipse cx="31.5" cy="305.6" rx="2.0" ry="0.7" fill="#c8c4ba" opacity="0.55" transform="rotate(24 31.5 305.6)"/><ellipse cx="167.8" cy="331.5" rx="4.6" ry="1.5" fill="#9c968a" opacity="0.55" transform="rotate(13 167.8 331.5)"/><ellipse cx="44.6" cy="259.8" rx="5.6" ry="1.9" fill="#5a4a32" opacity="0.6" transform="rotate(-32 44.6 259.8)"/><ellipse cx="103.3" cy="271.7" rx="5.3" ry="1.8" fill="#e2dfd8" opacity="0.55" transform="rotate(14 103.3 271.7)"/><ellipse cx="260.0" cy="269.3" rx="4.8" ry="1.6" fill="#6e5c40" opacity="0.6" transform="rotate(28 260.0 269.3)"/><ellipse cx="5.6" cy="322.4" rx="4.3" ry="1.4" fill="#6e5c40" opacity="0.6" transform="rotate(15 5.6 322.4)"/><ellipse cx="170.7" cy="293.8" rx="3.4" ry="1.1" fill="#e2dfd8" opacity="0.55" transform="rotate(-2 170.7 293.8)"/><ellipse cx="98.5" cy="311.1" rx="3.9" ry="1.3" fill="#5a4a32" opacity="0.6" transform="rotate(24 98.5 311.1)"/><ellipse cx="96.1" cy="251.7" rx="2.4" ry="0.8" fill="#d6d3cb" opacity="0.55" transform="rotate(5 96.1 251.7)"/><ellipse cx="367.9" cy="333.0" rx="3.4" ry="1.1" fill="#e2dfd8" opacity="0.55" transform="rotate(-25 367.9 333.0)"/><ellipse cx="233.7" cy="304.9" rx="3.6" ry="1.2" fill="#6e5c40" opacity="0.6" transform="rotate(-12 233.7 304.9)"/><ellipse cx="60.2" cy="281.8" rx="3.6" ry="1.2" fill="#4a3c28" opacity="0.6" transform="rotate(24 60.2 281.8)"/><ellipse cx="36.8" cy="317.7" rx="2.4" ry="0.8" fill="#6e5c40" opacity="0.6" transform="rotate(19 36.8 317.7)"/><ellipse cx="71.7" cy="242.5" rx="5.7" ry="1.9" fill="#4a3c28" opacity="0.6" transform="rotate(-11 71.7 242.5)"/><ellipse cx="358.5" cy="309.7" rx="2.7" ry="0.9" fill="#9c968a" opacity="0.55" transform="rotate(-31 358.5 309.7)"/><ellipse cx="335.3" cy="303.5" rx="2.7" ry="0.9" fill="#9c968a" opacity="0.55" transform="rotate(-1 335.3 303.5)"/><ellipse cx="102.8" cy="256.8" rx="2.6" ry="0.9" fill="#4a3c28" opacity="0.6" transform="rotate(-27 102.8 256.8)"/><ellipse cx="324.1" cy="326.3" rx="4.1" ry="1.4" fill="#e2dfd8" opacity="0.55" transform="rotate(3 324.1 326.3)"/><ellipse cx="248.8" cy="334.2" rx="4.8" ry="1.6" fill="#5a4a32" opacity="0.6" transform="rotate(-6 248.8 334.2)"/><ellipse cx="294.0" cy="301.5" rx="3.8" ry="1.3" fill="#9c968a" opacity="0.55" transform="rotate(-12 294.0 301.5)"/><ellipse cx="81.5" cy="300.1" rx="2.6" ry="0.9" fill="#e2dfd8" opacity="0.55" transform="rotate(-34 81.5 300.1)"/><ellipse cx="207.3" cy="292.1" rx="5.4" ry="1.8" fill="#9c968a" opacity="0.55" transform="rotate(32 207.3 292.1)"/><ellipse cx="38.5" cy="291.0" rx="2.0" ry="0.7" fill="#9c968a" opacity="0.55" transform="rotate(-12 38.5 291.0)"/><ellipse cx="53.1" cy="337.8" rx="4.3" ry="1.4" fill="#4a3c28" opacity="0.6" transform="rotate(6 53.1 337.8)"/><ellipse cx="370.5" cy="305.6" rx="5.1" ry="1.7" fill="#d6d3cb" opacity="0.55" transform="rotate(-5 370.5 305.6)"/><ellipse cx="261.9" cy="296.7" rx="5.4" ry="1.8" fill="#d6d3cb" opacity="0.55" transform="rotate(-7 261.9 296.7)"/><ellipse cx="183.6" cy="290.0" rx="5.6" ry="1.9" fill="#e2dfd8" opacity="0.55" transform="rotate(32 183.6 290.0)"/><ellipse cx="96.5" cy="248.8" rx="2.6" ry="0.9" fill="#6e5c40" opacity="0.6" transform="rotate(36 96.5 248.8)"/><ellipse cx="348.9" cy="326.8" rx="5.5" ry="1.8" fill="#4a3c28" opacity="0.6" transform="rotate(24 348.9 326.8)"/><ellipse cx="375.7" cy="291.7" rx="5.3" ry="1.8" fill="#e2dfd8" opacity="0.55" transform="rotate(-33 375.7 291.7)"/><ellipse cx="195.8" cy="339.1" rx="1.6" ry="0.5" fill="#4a3c28" opacity="0.6" transform="rotate(37 195.8 339.1)"/><ellipse cx="9.1" cy="225.9" rx="5.0" ry="1.7" fill="#d6d3cb" opacity="0.55" transform="rotate(-40 9.1 225.9)"/><ellipse cx="25.6" cy="318.9" rx="5.7" ry="1.9" fill="#c8c4ba" opacity="0.55" transform="rotate(-12 25.6 318.9)"/><ellipse cx="82.7" cy="269.8" rx="5.3" ry="1.8" fill="#5a4a32" opacity="0.6" transform="rotate(7 82.7 269.8)"/><ellipse cx="198.3" cy="262.9" rx="4.4" ry="1.5" fill="#e2dfd8" opacity="0.55" transform="rotate(34 198.3 262.9)"/><ellipse cx="79.7" cy="277.1" rx="2.4" ry="0.8" fill="#e2dfd8" opacity="0.55" transform="rotate(-21 79.7 277.1)"/><ellipse cx="87.5" cy="258.8" rx="2.9" ry="1.0" fill="#d6d3cb" opacity="0.55" transform="rotate(23 87.5 258.8)"/><ellipse cx="82.1" cy="272.6" rx="5.7" ry="1.9" fill="#4a3c28" opacity="0.6" transform="rotate(-34 82.1 272.6)"/><ellipse cx="27.6" cy="323.9" rx="5.8" ry="1.9" fill="#6e5c40" opacity="0.6" transform="rotate(23 27.6 323.9)"/><ellipse cx="127.5" cy="318.4" rx="3.1" ry="1.0" fill="#6e5c40" opacity="0.6" transform="rotate(36 127.5 318.4)"/><ellipse cx="25.7" cy="340.9" rx="5.4" ry="1.8" fill="#5a4a32" opacity="0.6" transform="rotate(-10 25.7 340.9)"/><ellipse cx="24.5" cy="333.6" rx="2.1" ry="0.7" fill="#4a3c28" opacity="0.6" transform="rotate(37 24.5 333.6)"/><ellipse cx="269.4" cy="337.4" rx="2.3" ry="0.8" fill="#6e5c40" opacity="0.6" transform="rotate(-21 269.4 337.4)"/><ellipse cx="320.1" cy="330.0" rx="4.3" ry="1.4" fill="#d6d3cb" opacity="0.55" transform="rotate(34 320.1 330.0)"/><ellipse cx="55.2" cy="328.2" rx="5.7" ry="1.9" fill="#d6d3cb" opacity="0.55" transform="rotate(-30 55.2 328.2)"/><ellipse cx="121.1" cy="293.1" rx="2.6" ry="0.9" fill="#c8c4ba" opacity="0.55" transform="rotate(21 121.1 293.1)"/><ellipse cx="198.6" cy="337.5" rx="1.8" ry="0.6" fill="#5a4a32" opacity="0.6" transform="rotate(34 198.6 337.5)"/><ellipse cx="367.8" cy="336.0" rx="4.4" ry="1.5" fill="#4a3c28" opacity="0.6" transform="rotate(11 367.8 336.0)"/><ellipse cx="39.5" cy="281.0" rx="5.3" ry="1.8" fill="#4a3c28" opacity="0.6" transform="rotate(8 39.5 281.0)"/><ellipse cx="71.9" cy="337.2" rx="5.7" ry="1.9" fill="#6e5c40" opacity="0.6" transform="rotate(-8 71.9 337.2)"/><ellipse cx="19.6" cy="241.9" rx="2.2" ry="0.7" fill="#e2dfd8" opacity="0.55" transform="rotate(37 19.6 241.9)"/><ellipse cx="9.1" cy="273.7" rx="5.6" ry="1.9" fill="#5a4a32" opacity="0.6" transform="rotate(-3 9.1 273.7)"/><ellipse cx="98.2" cy="297.5" rx="3.0" ry="1.0" fill="#6e5c40" opacity="0.6" transform="rotate(19 98.2 297.5)"/><ellipse cx="62.7" cy="239.5" rx="3.9" ry="1.3" fill="#c8c4ba" opacity="0.55" transform="rotate(3 62.7 239.5)"/><ellipse cx="173.5" cy="262.6" rx="5.4" ry="1.8" fill="#6e5c40" opacity="0.6" transform="rotate(28 173.5 262.6)"/><ellipse cx="191.8" cy="342.1" rx="2.7" ry="0.9" fill="#6e5c40" opacity="0.6" transform="rotate(-15 191.8 342.1)"/><ellipse cx="209.2" cy="271.2" rx="4.5" ry="1.5" fill="#6e5c40" opacity="0.6" transform="rotate(-32 209.2 271.2)"/><ellipse cx="210.9" cy="282.7" rx="5.4" ry="1.8" fill="#c8c4ba" opacity="0.55" transform="rotate(15 210.9 282.7)"/><ellipse cx="249.9" cy="270.9" rx="3.6" ry="1.2" fill="#c8c4ba" opacity="0.55" transform="rotate(-35 249.9 270.9)"/><ellipse cx="120.5" cy="300.0" rx="1.7" ry="0.6" fill="#5a4a32" opacity="0.6" transform="rotate(-18 120.5 300.0)"/><ellipse cx="312.6" cy="319.4" rx="2.5" ry="0.8" fill="#d6d3cb" opacity="0.55" transform="rotate(-6 312.6 319.4)"/><ellipse cx="209.3" cy="337.4" rx="3.6" ry="1.2" fill="#9c968a" opacity="0.55" transform="rotate(-15 209.3 337.4)"/><ellipse cx="251.0" cy="283.4" rx="5.4" ry="1.8" fill="#c8c4ba" opacity="0.55" transform="rotate(24 251.0 283.4)"/><ellipse cx="369.0" cy="333.9" rx="4.4" ry="1.5" fill="#9c968a" opacity="0.55" transform="rotate(25 369.0 333.9)"/><ellipse cx="92.0" cy="334.2" rx="1.5" ry="0.5" fill="#4a3c28" opacity="0.6" transform="rotate(-2 92.0 334.2)"/><ellipse cx="242.8" cy="304.4" rx="3.2" ry="1.1" fill="#d6d3cb" opacity="0.55" transform="rotate(38 242.8 304.4)"/><ellipse cx="60.2" cy="253.7" rx="2.7" ry="0.9" fill="#4a3c28" opacity="0.6" transform="rotate(-25 60.2 253.7)"/><ellipse cx="261.7" cy="314.5" rx="5.7" ry="1.9" fill="#e2dfd8" opacity="0.55" transform="rotate(20 261.7 314.5)"/><ellipse cx="252.3" cy="275.2" rx="3.2" ry="1.1" fill="#d6d3cb" opacity="0.55" transform="rotate(6 252.3 275.2)"/><ellipse cx="355.7" cy="300.0" rx="3.6" ry="1.2" fill="#9c968a" opacity="0.55" transform="rotate(-37 355.7 300.0)"/><ellipse cx="333.1" cy="283.0" rx="5.7" ry="1.9" fill="#6e5c40" opacity="0.6" transform="rotate(22 333.1 283.0)"/><ellipse cx="261.8" cy="284.9" rx="2.8" ry="0.9" fill="#5a4a32" opacity="0.6" transform="rotate(-38 261.8 284.9)"/><ellipse cx="100.6" cy="316.1" rx="1.9" ry="0.6" fill="#5a4a32" opacity="0.6" transform="rotate(33 100.6 316.1)"/><ellipse cx="109.5" cy="338.1" rx="4.1" ry="1.4" fill="#d6d3cb" opacity="0.55" transform="rotate(-13 109.5 338.1)"/><ellipse cx="105.3" cy="285.8" rx="3.5" ry="1.2" fill="#6e5c40" opacity="0.6" transform="rotate(3 105.3 285.8)"/><ellipse cx="178.3" cy="312.8" rx="2.5" ry="0.8" fill="#6e5c40" opacity="0.6" transform="rotate(-11 178.3 312.8)"/><ellipse cx="163.6" cy="270.6" rx="2.9" ry="1.0" fill="#9c968a" opacity="0.55" transform="rotate(2 163.6 270.6)"/><ellipse cx="357.7" cy="300.0" rx="3.2" ry="1.1" fill="#e2dfd8" opacity="0.55" transform="rotate(23 357.7 300.0)"/><ellipse cx="161.9" cy="280.1" rx="3.2" ry="1.1" fill="#9c968a" opacity="0.55" transform="rotate(7 161.9 280.1)"/><ellipse cx="32.9" cy="244.2" rx="5.7" ry="1.9" fill="#e2dfd8" opacity="0.55" transform="rotate(4 32.9 244.2)"/><ellipse cx="102.8" cy="309.8" rx="4.6" ry="1.5" fill="#6e5c40" opacity="0.6" transform="rotate(-37 102.8 309.8)"/><ellipse cx="21.9" cy="229.4" rx="5.7" ry="1.9" fill="#e2dfd8" opacity="0.55" transform="rotate(36 21.9 229.4)"/><ellipse cx="26.8" cy="254.9" rx="4.4" ry="1.5" fill="#5a4a32" opacity="0.6" transform="rotate(40 26.8 254.9)"/><ellipse cx="187.8" cy="317.7" rx="2.5" ry="0.8" fill="#e2dfd8" opacity="0.55" transform="rotate(15 187.8 317.7)"/><ellipse cx="20.6" cy="279.8" rx="1.5" ry="0.5" fill="#4a3c28" opacity="0.6" transform="rotate(18 20.6 279.8)"/><ellipse cx="92.4" cy="312.5" rx="5.7" ry="1.9" fill="#d6d3cb" opacity="0.55" transform="rotate(-13 92.4 312.5)"/><ellipse cx="8.3" cy="323.9" rx="4.6" ry="1.5" fill="#6e5c40" opacity="0.6" transform="rotate(-8 8.3 323.9)"/><ellipse cx="298.3" cy="308.4" rx="3.4" ry="1.1" fill="#c8c4ba" opacity="0.55" transform="rotate(-24 298.3 308.4)"/><ellipse cx="8.8" cy="328.5" rx="4.1" ry="1.4" fill="#6e5c40" opacity="0.6" transform="rotate(-2 8.8 328.5)"/><ellipse cx="141.8" cy="331.6" rx="5.7" ry="1.9" fill="#c8c4ba" opacity="0.55" transform="rotate(31 141.8 331.6)"/><ellipse cx="28.3" cy="249.7" rx="2.4" ry="0.8" fill="#6e5c40" opacity="0.6" transform="rotate(12 28.3 249.7)"/><radialGradient id="lsh" cx="0.5" cy="0.5" r="0.5"><stop offset="0" stop-color="#2a2016" stop-opacity="0.45"/><stop offset="1" stop-color="#2a2016" stop-opacity="0"/></radialGradient><ellipse cx="300" cy="265" rx="90" ry="40" fill="url(#lsh)"/><path d="M238 252 L330 247 L342 256 L344 272 L240 276 Z" fill="#a99d86"/><path d="M222 270 L334 268 L340 280 L338 294 L220 286 Z" fill="#bcb3a0"/><path d="M334 268 L342 276 L340 294 L332 292 Z" fill="#5e523f"/><path d="M330 247 L344 256 L344 272 L336 268 Z" fill="#6a5c48"/><path d="M226 276 H330 M240 262 H320" stroke="#8a7e6a" stroke-width="1"/><path d="M60 252 L88 246 L92 210 L112 208 L114 244 L112 262 L66 262 Z" fill="#5e5040"/><path d="M104 210 L140 208 L144 258 L112 264 Z" fill="#7a6a55"/><path d="M77 212 C84 204 96 200 104 198 C106 186 116 180 128 182 C136 184 142 192 142 200 C146 204 148 210 147 214 C130 210 100 212 82 216 C78 216 76 214 77 212 Z" fill="#e2dccd"/><path d="M104 198 C120 196 134 198 142 202" fill="none" stroke="#b8ae98" stroke-width="1.5"/><path d="M176 154 C158 154 145 164 145 180 C145 192 150 200 146 210 C136 222 132 236 134 250 C137 268 154 278 180 278 C206 278 224 266 226 248 C227 232 218 222 210 210 C206 204 210 194 210 182 L200 182 C194 180 190 174 189 166 C187 158 184 154 176 154 Z" fill="#8e5e2a" transform="translate(4,-1)"/><path d="M176 154 C158 154 145 164 145 180 C145 192 150 200 146 210 C136 222 132 236 134 250 C137 268 154 278 180 278 C206 278 224 266 226 248 C227 232 218 222 210 210 C206 204 210 194 210 182 L200 182 C194 180 190 174 189 166 C187 158 184 154 176 154 Z" fill="#efebe0"/><circle cx="176" cy="192" r="13" fill="#4a443e"/><circle cx="176" cy="192" r="10" fill="#1c1816"/><circle cx="176" cy="192" r="11.5" fill="none" stroke="#9a9080" stroke-width="1"/><rect x="153" y="235" width="44" height="8" fill="#4a3828"/><rect x="165" y="237.5" width="20" height="3" fill="#cfc6b4"/><path d="M175 66 L186 66 L183 180 L170 180 Z" fill="#2e2a26"/><path d="M177 36 C180 32 194 34 197 38 L199 52 L188 68 L176 67 L175 48 Z" fill="#141110"/><rect x="171" y="76" width="14" height="0.8" fill="#8a8478"/><rect x="171" y="85" width="14" height="0.8" fill="#8a8478"/><rect x="171" y="94" width="14" height="0.8" fill="#8a8478"/><rect x="171" y="103" width="14" height="0.8" fill="#8a8478"/><rect x="171" y="112" width="14" height="0.8" fill="#8a8478"/><rect x="171" y="121" width="14" height="0.8" fill="#8a8478"/><rect x="171" y="130" width="14" height="0.8" fill="#8a8478"/><rect x="171" y="139" width="14" height="0.8" fill="#8a8478"/><rect x="171" y="148" width="14" height="0.8" fill="#8a8478"/><rect x="171" y="157" width="14" height="0.8" fill="#8a8478"/><rect x="171" y="166" width="14" height="0.8" fill="#8a8478"/><rect x="171" y="175" width="14" height="0.8" fill="#8a8478"/></g></svg>
<div style="position:absolute;left:691px;top:595.4px;width:95.5px;height:15px;background:#5e9e22;"></div>
<div id="t65" class="tx" style="left:692px;top:596.92px;font-size:12.5px;line-height:12.5px;color:#d8efc0;font-weight:normal;font-family:'Liberation Sans',sans-serif;transform:scaleX(1.0653);transform-origin:0 0;">Christine Schott</div>
<div style="position:absolute;left:691px;top:595.4px;width:2px;height:43px;background:#5e9e22;"></div>
<svg style="position:absolute;left:500px;top:542px;" width="46" height="46" viewBox="0 0 46 46"><path d="M23 1 H45 V23 A22 22 0 1 1 23 1 Z" fill="#1170e0"/></svg>
<svg style="position:absolute;left:766px;top:542px;" width="46" height="46" viewBox="0 0 46 46"><path d="M1 1 H23 A22 22 0 1 1 1 23 Z" fill="#1170e0"/></svg>
<svg style="position:absolute;left:690px;top:436px;" width="22" height="36" viewBox="0 0 22 36"><path d="M5.8 5.5 Q5.8 4 7.3 4 H10 L10.5 5 L11 4 H14.4 Q15.9 4 15.9 5.5 V6.5 Q15.9 8 14.4 8 H12.9 V28 H14.4 Q15.9 28 15.9 29.5 V30.7 Q15.9 32.2 14.4 32.2 H11 L10.5 31.5 L10 32.2 H7.3 Q5.8 32.2 5.8 30.7 V29.5 Q5.8 28 7.3 28 H8 V8 H7.3 Q5.8 8 5.8 6.5 Z" fill="#fff" stroke="#6a6a6a" stroke-width="1.5"/></svg>
<div style="position:absolute;left:2043px;top:191px;width:502px;height:1201px;background:#fff;"></div>
<div style="position:absolute;left:2545px;top:191px;width:15px;height:1201px;background:#efefef;"></div>
<div style="position:absolute;left:2046.5px;top:197px;width:495px;height:8px;background:#efefef;"></div>
<div style="position:absolute;left:2046.5px;top:205px;width:1px;height:806px;background:#e9e9e9;"></div>
<div style="position:absolute;left:2540.5px;top:205px;width:1px;height:806px;background:#e9e9e9;"></div>
<div style="position:absolute;left:2046.5px;top:310px;width:495px;height:6px;background:#efefef;"></div>
<div style="position:absolute;left:2046.5px;top:563px;width:495px;height:5px;background:#efefef;"></div>
<svg style="position:absolute;left:2544px;top:196px;" width="15" height="12" viewBox="0 0 15 12"><path d="M3 9 L7.5 4 L12 9 Z" fill="#a8a8a8"/></svg>
<svg style="position:absolute;left:2544px;top:1370px;" width="15" height="12" viewBox="0 0 15 12"><path d="M3 3 L7.5 8 L12 3 Z" fill="#a8a8a8"/></svg>
<svg style="position:absolute;left:2055px;top:214.5px;" width="17" height="10" viewBox="0 0 17 10"><path d="M1 9 L8.2 1.5 L15.5 9" fill="none" stroke="#555" stroke-width="1.6"/></svg>
<div id="t66" class="tx" style="left:2078.8px;top:211.46px;font-size:18px;line-height:18px;color:#111;font-weight:bold;font-family:'Liberation Sans',sans-serif;transform:scaleX(1.0922);transform-origin:0 0;">Style</div>
<div style="position:absolute;left:2057px;top:253.4px;width:366.5px;height:40.2px;background:#fff;border:1.5px solid #8f8f8f;box-sizing:border-box;"></div>
<div id="t67" class="tx" style="left:2060.8px;top:261.84px;font-size:18.5px;line-height:18.5px;color:#111;font-weight:normal;font-family:'Liberation Sans',sans-serif;transform:scaleX(1.0855);transform-origin:0 0;">Text Body</div>
<svg style="position:absolute;left:2397.9px;top:269px;" width="14.3" height="9.7" viewBox="0 0 14.3 9.7"><path d="M0 0 H14.3 L7.15 9.7 Z" fill="#111"/></svg>
<svg style="position:absolute;left:2430px;top:250px;" width="110" height="50" viewBox="0 0 110 50"><path d="M13 34 L25.5 12.6 H28.5 L31 22 M18.5 27.3 H27" fill="none" stroke="#646464" stroke-width="3.4"/><path d="M28.5 23.5 A8.4 8.4 0 1 1 29.5 37.5" fill="none" stroke="#4a80bb" stroke-width="2.4"/><path d="M30.5 29 L33.5 35 L30 36 Z" fill="#555"/><path d="M62.5 34 L75 12.6 H78 L80.5 27 M68.5 27.3 H79" fill="none" stroke="#646464" stroke-width="3.4"/><path d="M83.4 22.3 V39.5 M74.6 31 H92" stroke="#4a80bb" stroke-width="2.6"/></svg>
<svg style="position:absolute;left:2055px;top:324.5px;" width="17" height="10" viewBox="0 0 17 10"><path d="M1 9 L8.2 1.5 L15.5 9" fill="none" stroke="#555" stroke-width="1.6"/></svg>
<div id="t68" class="tx" style="left:2078.8px;top:322.46px;font-size:18px;line-height:18px;color:#111;font-weight:bold;font-family:'Liberation Sans',sans-serif;transform:scaleX(1.0470);transform-origin:0 0;">Character</div>
<svg style="position:absolute;left:2518px;top:329px;" width="14" height="14" viewBox="0 0 14 14"><rect x="0.6" y="0.6" width="12.8" height="12.8" fill="#f4f4f4" stroke="#8a8a8a" stroke-width="1.2"/><path d="M3.5 3.5 L10.5 10.5 M10.5 5 V10.5 H5" fill="none" stroke="#444" stroke-width="1.8"/><rect x="6" y="6" width="7.4" height="7.4" fill="#555"/></svg>
<div style="position:absolute;left:2057px;top:364px;width:378.2px;height:40.8px;background:#fff;border:1.5px solid #8f8f8f;box-sizing:border-box;"></div>
<div id="t69" class="tx" style="left:2060.8px;top:372.84px;font-size:18.5px;line-height:18.5px;color:#111;font-weight:normal;font-family:'Liberation Sans',sans-serif;font-style:italic;transform:scaleX(1.0508);transform-origin:0 0;">Lucida Sans</div>
<svg style="position:absolute;left:2409.8px;top:380.2px;" width="14.4" height="9" viewBox="0 0 14.4 9"><path d="M0 0 H14.4 L7.2 9 Z" fill="#111"/></svg>
<div style="position:absolute;left:2445px;top:364px;width:86px;height:40.8px;background:#fff;border:1.5px solid #8f8f8f;box-sizing:border-box;"></div>
<div id="t70" class="tx" style="left:2448.7px;top:372.84px;font-size:18.5px;line-height:18.5px;color:#111;font-weight:normal;font-family:'Liberation Sans',sans-serif;transform:scaleX(1.0248);transform-origin:0 0;">11.5</div>
<svg style="position:absolute;left:2505.4px;top:380.2px;" width="14.3" height="9" viewBox="0 0 14.3 9"><path d="M0 0 H14.3 L7.15 9 Z" fill="#111"/></svg>
<div style="position:absolute;left:2058.4px;top:431.3px;width:47.1px;height:49.8px;background:#f4f6f9;border:1.5px solid #4a5369;border-radius:4px;box-sizing:border-box;"></div>
<svg style="position:absolute;left:2068.8px;top:440.8px;" width="25" height="30" viewBox="0 0 25 30"><path d="M1.5 1.5 H13 C20 1.5 22 5 22 8 C22 11 20 13 17.5 14 C21 15 23.5 17.5 23.5 21.5 C23.5 26 20.5 28.5 14 28.5 H1.5 Z M6.7 5.8 V12.3 H13 C15.8 12.3 17 11 17 9 C17 7 15.8 5.8 13 5.8 Z M6.7 16.5 V24.2 H13.8 C17 24.2 18.3 23 18.3 20.4 C18.3 17.8 17 16.5 13.8 16.5 Z" fill="#666"/></svg>
<svg style="position:absolute;left:2124px;top:441px;" width="16" height="30" viewBox="0 0 16 30"><path d="M4 1 H15 M0.5 29 H11 M10 1 L5 29" stroke="#6e6e6e" stroke-width="1.6" fill="none"/></svg>
<svg style="position:absolute;left:2168px;top:441px;" width="30" height="32" viewBox="0 0 30 32"><path d="M3.5 1 V17 C3.5 24 7 27 13 27 C19 27 22.5 24 22.5 17 V1" stroke="#6e6e6e" stroke-width="1.8" fill="none"/><rect x="0.3" y="29.5" width="28" height="1.6" fill="#6e6e6e"/></svg>
<svg style="position:absolute;left:2210.6px;top:451.3px;" width="12" height="6.8" viewBox="0 0 12 6.8"><path d="M0 0 H12 L6.0 6.8 Z" fill="#111"/></svg>
<svg style="position:absolute;left:2235px;top:440px;" width="31" height="33" viewBox="0 0 31 33"><path d="M23 5 C21 2.5 18 1.5 15 1.5 C10 1.5 8 4 8 7.5 C8 10.3 9.5 12 12 13.2" stroke="#6e6e6e" stroke-width="3" fill="none"/><path d="M9 27 C11 29.5 14 30.5 17 30.5 C22 30.5 24 28 24 24 C24 21.5 23 19.8 21 18.5" stroke="#6e6e6e" stroke-width="3" fill="none"/><rect x="0.3" y="13.4" width="29.5" height="1.6" fill="#6e6e6e"/></svg>
<svg style="position:absolute;left:2286px;top:440px;" width="32" height="32" viewBox="0 0 32 32"><path d="M2 30 L11.5 1 H18.5 L29 30 H23 L20.8 23.5 H9.5 L7.5 30 Z M11 18.5 H19 L15 6.5 Z" fill="#c9c9c9" transform="translate(1.5,1.5)"/><path d="M1 29 L10.5 0 H17.5 L28 29 H22 L19.8 22.5 H8.5 L6.5 29 Z M10 17.5 H18 L14 5.5 Z" fill="#6a6a6a"/></svg>
<svg style="position:absolute;left:2441px;top:437px;" width="34" height="35" viewBox="0 0 34 35"><path d="M0 33 L10 3 H16.5 L26.5 33 H21 L18.8 26.5 H7.8 L5.7 33 Z M9.3 21.5 H17.3 L13.3 9 Z" fill="#666"/><path d="M28 12 V1.5 M24.5 5 L28 1.5 L31.5 5" fill="none" stroke="#4a85c0" stroke-width="1.6"/></svg>
<svg style="position:absolute;left:2490px;top:437px;" width="34" height="35" viewBox="0 0 34 35"><path d="M0 33 L8.5 8 H14 L22.5 33 H17.5 L15.7 27.5 H6.8 L5 33 Z M8.2 22.5 H14.5 L11.3 12.5 Z" fill="#666"/><path d="M28 1 V12.5 M24.5 9 L28 12.5 L31.5 9" fill="none" stroke="#4a85c0" stroke-width="1.6"/></svg>
<svg style="position:absolute;left:2061px;top:509px;" width="36" height="35" viewBox="0 0 36 35"><path d="M9.2 23 L16.8 1.8 H20.5 L28 23 M11.6 16.6 H25.6" fill="none" stroke="#6a6a6a" stroke-width="3.4"/><rect x="0.4" y="24.4" width="35" height="9.6" fill="#d01a22"/></svg>
<svg style="position:absolute;left:2107.6px;top:521.4px;" width="11.4" height="7.5" viewBox="0 0 11.4 7.5"><path d="M0 0 H11.4 L5.7 7.5 Z" fill="#111"/></svg>
<svg style="position:absolute;left:2080.6px;top:502.7px;" width="80" height="34" viewBox="0 0 80 34"><path d="M63.1 9.6 L66.1 7.1 L70.9 12 L68.2 14.8 Z" fill="#55657a"/><path d="M61.25 12.1 L65.9 17.1 L56.4 27.1 L53 27.4 L49.1 27.7 L51.8 21.6 Z" fill="#55657a"/><path d="M71 17.9 C69.5 20.5 67.7 22.5 67.7 24.3 A3.35 3.35 0 0 0 74.4 24.3 C74.4 22.5 72.5 20.5 71 17.9 Z" fill="#4a85c0"/></svg>
<div style="position:absolute;left:2126px;top:533.4px;width:34px;height:9px;background:#fff200;"></div>
<svg style="position:absolute;left:2171px;top:521.4px;" width="10.7" height="7.5" viewBox="0 0 10.7 7.5"><path d="M0 0 H10.7 L5.35 7.5 Z" fill="#111"/></svg>
<svg style="position:absolute;left:2169.2px;top:503.9px;" width="80" height="42" viewBox="0 0 80 42"><path d="M43.2 32.6 L56.4 6.3 H61.8 L65.5 22 L60.5 26.5 L60.2 25.6 H51.2 L47.5 32.6 Z M52.8 23 H60.4 L58.3 10.5 Z" fill="#4a5369"/><rect x="41.8" y="34.4" width="14" height="1.6" fill="#4a5369"/><path d="M69.7 19.4 L75.6 24.7 L68.9 31 L63.6 25 Z" fill="#8bbbd2"/><path d="M63.6 25 L68.9 31 L61.6 38.3 L56.3 32.5 Z" fill="#fff" stroke="#8bbbd2" stroke-width="1.5" stroke-linejoin="round"/></svg>
<svg style="position:absolute;left:2355px;top:510px;" width="33" height="32" viewBox="0 0 33 32"><text x="0" y="18.2" font-family="Liberation Sans" font-size="23" fill="#6a6a6a" textLength="31" lengthAdjust="spacingAndGlyphs">AV</text><path d="M1.5 25.5 H29.5 M5 22 L1.5 25.5 L5 29 M26 22 L29.5 25.5 L26 29" fill="none" stroke="#4a85c0" stroke-width="1.3"/></svg>
<svg style="position:absolute;left:2400.3px;top:521.4px;" width="11.3" height="7.5" viewBox="0 0 11.3 7.5"><path d="M0 0 H11.3 L5.65 7.5 Z" fill="#111"/></svg>
<svg style="position:absolute;left:2441px;top:505px;" width="36" height="40" viewBox="0 0 36 40"><path d="M1.5 11.5 L17 32 M17 11.5 L1.5 32" stroke="#666" stroke-width="3.4"/><text x="21" y="20.5" font-family="Liberation Sans" font-size="20" fill="#4a85c0" textLength="10" lengthAdjust="spacingAndGlyphs">2</text></svg>
<svg style="position:absolute;left:2491px;top:505px;" width="36" height="40" viewBox="0 0 36 40"><path d="M1 11.5 L16.5 32 M16.5 11.5 L1 32" stroke="#666" stroke-width="3.4"/><text x="21" y="36.8" font-family="Liberation Sans" font-size="20" fill="#4a85c0" textLength="10.5" lengthAdjust="spacingAndGlyphs">2</text></svg>
<svg style="position:absolute;left:2055px;top:576.5px;" width="17" height="10" viewBox="0 0 17 10"><path d="M1 9 L8.2 1.5 L15.5 9" fill="none" stroke="#555" stroke-width="1.6"/></svg>
<div id="t71" class="tx" style="left:2078.8px;top:574.26px;font-size:18px;line-height:18px;color:#111;font-weight:bold;font-family:'Liberation Sans',sans-serif;transform:scaleX(1.0669);transform-origin:0 0;">Paragraph</div>
<svg style="position:absolute;left:2518px;top:581px;" width="14" height="14" viewBox="0 0 14 14"><rect x="0.6" y="0.6" width="12.8" height="12.8" fill="#f4f4f4" stroke="#8a8a8a" stroke-width="1.2"/><path d="M3.5 3.5 L10.5 10.5 M10.5 5 V10.5 H5" fill="none" stroke="#444" stroke-width="1.8"/><rect x="6" y="6" width="7.4" height="7.4" fill="#555"/></svg>
<div style="position:absolute;left:2058.1px;top:612.8px;width:46.1px;height:48.3px;background:#f4f6f9;border:1.5px solid #4a5369;border-radius:4px;box-sizing:border-box;"></div>
<svg style="position:absolute;left:2066.7px;top:621.5px;" width="28" height="30" viewBox="0 0 28 30"><rect x="0" y="0" width="27.5" height="1.5" fill="#777"/><rect x="0" y="4.3" width="17.7" height="1.5" fill="#777"/><rect x="0" y="12.2" width="27.5" height="1.5" fill="#777"/><rect x="0" y="16.3" width="17.7" height="1.5" fill="#777"/><rect x="0" y="24" width="27.5" height="1.5" fill="#777"/><rect x="0" y="28.3" width="17.7" height="1.5" fill="#777"/></svg>
<svg style="position:absolute;left:2116.4px;top:621.5px;" width="28" height="30" viewBox="0 0 28 30"><rect x="0" y="0" width="26.6" height="1.5" fill="#777"/><rect x="6" y="4.3" width="14.600000000000001" height="1.5" fill="#777"/><rect x="0" y="12.2" width="26.6" height="1.5" fill="#777"/><rect x="6" y="16.3" width="14.600000000000001" height="1.5" fill="#777"/><rect x="0" y="24" width="26.6" height="1.5" fill="#777"/><rect x="6" y="28.3" width="14.600000000000001" height="1.5" fill="#777"/></svg>
<svg style="position:absolute;left:2166px;top:621.5px;" width="28" height="30" viewBox="0 0 28 30"><rect x="0" y="0" width="26.8" height="1.5" fill="#777"/><rect x="10" y="4.3" width="16.8" height="1.5" fill="#777"/><rect x="0" y="12.2" width="26.8" height="1.5" fill="#777"/><rect x="10" y="16.3" width="16.8" height="1.5" fill="#777"/><rect x="0" y="24" width="26.8" height="1.5" fill="#777"/><rect x="10" y="28.3" width="16.8" height="1.5" fill="#777"/></svg>
<svg style="position:absolute;left:2214.8px;top:621.5px;" width="28" height="30" viewBox="0 0 28 30"><rect x="0" y="0" width="27.5" height="1.5" fill="#777"/><rect x="0" y="4.3" width="27.5" height="1.5" fill="#777"/><rect x="0" y="12.2" width="27.5" height="1.5" fill="#777"/><rect x="0" y="16.3" width="27.5" height="1.5" fill="#777"/><rect x="0" y="24" width="27.5" height="1.5" fill="#777"/><rect x="0" y="28.3" width="27.5" height="1.5" fill="#777"/></svg>
<svg style="position:absolute;left:2064px;top:683px;" width="32" height="31" viewBox="0 0 32 31"><circle cx="1.8" cy="1.8" r="1.7" fill="#8a87ba"/><circle cx="1.8" cy="13.6" r="1.7" fill="#8a87ba"/><rect x="7" y="0.5" width="23" height="1.4" fill="#4a5369"/><rect x="7" y="4.5" width="14" height="1.4" fill="#4a5369"/><rect x="7" y="12.3" width="23" height="1.4" fill="#4a5369"/><rect x="7" y="16.3" width="14" height="1.4" fill="#4a5369"/><rect x="7" y="24" width="23" height="1.4" fill="#4a5369"/><rect x="7" y="28.5" width="14" height="1.4" fill="#4a5369"/></svg>
<svg style="position:absolute;left:2108.8px;top:694.7px;" width="11.9" height="6.1" viewBox="0 0 11.9 6.1"><path d="M0 0 H11.9 L5.95 6.1 Z" fill="#111"/></svg>
<svg style="position:absolute;left:2131.5px;top:682px;" width="32" height="32" viewBox="0 0 32 32"><text x="0" y="12" font-family="Liberation Sans" font-size="11" font-weight="bold" fill="#8a87ba">1</text><text x="0" y="24.5" font-family="Liberation Sans" font-size="11" font-weight="bold" fill="#8a87ba">2</text><rect x="8" y="1.5" width="22" height="1.4" fill="#4a5369"/><rect x="8" y="5.5" width="13" height="1.4" fill="#4a5369"/><rect x="8" y="13.3" width="22" height="1.4" fill="#4a5369"/><rect x="8" y="17.3" width="13" height="1.4" fill="#4a5369"/><rect x="8" y="25" width="22" height="1.4" fill="#4a5369"/><rect x="8" y="29.5" width="13" height="1.4" fill="#4a5369"/></svg>
<svg style="position:absolute;left:2176.6px;top:694.7px;" width="11.6" height="6.1" viewBox="0 0 11.6 6.1"><path d="M0 0 H11.6 L5.8 6.1 Z" fill="#111"/></svg>
<svg style="position:absolute;left:2370px;top:670px;" width="45" height="45" viewBox="0 0 45 45"><circle cx="16.8" cy="15.6" r="4.6" fill="#4a5369"/><path d="M13.5 20 L12 23 Q10.8 26 13.6 28 L23.5 35.5 Q26.3 37.5 28.2 34.5 L36.2 21.3 L18.8 11 Z" fill="#4a5369"/><path d="M20.6 15.9 L32.5 21.9 Q22 22.5 15.3 25.6 Z" fill="#fff"/><path d="M37.6 25 C36.6 27 35.9 28.5 36.2 30 A1.6 1.6 0 0 0 39.2 30 C39.4 28.5 38.6 27 37.6 25 Z" fill="#4a85c0"/></svg>
<div style="position:absolute;left:2415.2px;top:682px;width:84.6px;height:28.8px;background:#fff;border:2px solid #3a3a3a;border-radius:2px;box-sizing:border-box;"></div>
<svg style="position:absolute;left:2515px;top:694.7px;" width="11.3" height="6.1" viewBox="0 0 11.3 6.1"><path d="M0 0 H11.3 L5.65 6.1 Z" fill="#111"/></svg>
<div style="position:absolute;left:2057px;top:732px;width:472.4px;height:1.6px;background:#8a8a8a;"></div>
<div id="t72" class="tx" style="left:2056px;top:744.92px;font-size:19px;line-height:19px;color:#222;font-weight:normal;font-family:'Liberation Sans',sans-serif;transform:scaleX(1.0277);transform-origin:0 0;">Spacing:</div>
<div style="position:absolute;left:2057px;top:764px;width:13px;height:1.3px;background:#222;"></div>
<div id="t73" class="tx" style="left:2297.5px;top:744.92px;font-size:19px;line-height:19px;color:#222;font-weight:normal;font-family:'Liberation Sans',sans-serif;transform:scaleX(1.0325);transform-origin:0 0;">Indent:</div>
<div style="position:absolute;left:2298.5px;top:764px;width:6px;height:1.3px;background:#222;"></div>
<svg style="position:absolute;left:2066px;top:783px;" width="32" height="34" viewBox="0 0 32 34"><path d="M0.5 2.5 H14.5 M0.5 6 H14.5 M0.5 26.5 H14.5 M0.5 30 H14.5" stroke="#777" stroke-width="1.4"/><path d="M23.5 1.5 V14 M18.5 6.5 L23.5 1.5 L28.5 6.5 M23.5 19 V32 M18.5 27 L23.5 32 L28.5 27" fill="none" stroke="#5b8fc4" stroke-width="1.5"/></svg>
<svg style="position:absolute;left:2116px;top:783px;" width="32" height="34" viewBox="0 0 32 34"><path d="M0.5 9 H14.5 M0.5 13.5 H14.5 M0.5 18 H14.5 M0.5 22.5 H14.5" stroke="#777" stroke-width="1.4"/><path d="M23.5 0 V12 M18.5 7 L23.5 12 L28.5 7 M23.5 20 V32.5 M18.5 25 L23.5 20 L28.5 25" fill="none" stroke="#5b8fc4" stroke-width="1.5"/></svg>
<svg style="position:absolute;left:2304.5px;top:784.5px;" width="31" height="32" viewBox="0 0 31 32"><path d="M1.5 0.7 H29 M10 9 H29 M13 14.5 H29 M13 20 H29 M10 25 H29 M1.5 30.5 H29" stroke="#666" stroke-width="1.3"/><path d="M0 12 H9 M5 7.5 L9.5 12 L5 16.5" fill="none" stroke="#5b8fc4" stroke-width="1.4"/></svg>
<svg style="position:absolute;left:2356.5px;top:784.5px;" width="31" height="32" viewBox="0 0 31 32"><path d="M0.5 0.7 H28.5 M11 9 H28.5 M14 14.5 H28.5 M14 20 H28.5 M11 25 H28.5" stroke="#666" stroke-width="1.3"/><path d="M1 30.5 H28.5" stroke="#4a5369" stroke-width="2"/><path d="M7 7.5 L1 12 L7 16.5 Z" fill="#8a87ba"/></svg>
<svg style="position:absolute;left:2405.5px;top:784.5px;" width="31" height="32" viewBox="0 0 31 32"><path d="M1.5 0.7 H29.5 M12 9 H29.5 M12 14.5 H29.5 M12 20 H29.5 M12 25 H29.5 M12 30.5 H29.5" stroke="#666" stroke-width="1.3"/><path d="M0 14 H10 M6 9.5 L10.5 14 L6 18.5" fill="none" stroke="#5b8fc4" stroke-width="1.4"/></svg>
<div style="position:absolute;left:2095.7px;top:836.1px;width:183.8px;height:51.6px;background:#fff;border:1.5px solid #8f8f8f;box-sizing:border-box;"></div>
<div id="t74" class="tx" style="left:2101.7px;top:853.09px;font-size:19.5px;line-height:19.5px;color:#111;font-weight:normal;font-family:'Liberation Sans',sans-serif;transform:scaleX(0.9941);transform-origin:0 0;">0.09 "</div>
<svg style="position:absolute;left:2258.5px;top:845.1px;" width="12" height="30" viewBox="0 0 12 30"><path d="M1 5 H11 L6 0 Z M1 27 H11 L6 32 Z" fill="#111" transform="scale(1,0.9)"/></svg>
<div style="position:absolute;left:2095.7px;top:897.8px;width:183.8px;height:51.3px;background:#fff;border:1.5px solid #8f8f8f;box-sizing:border-box;"></div>
<div id="t75" class="tx" style="left:2101.7px;top:914.79px;font-size:19.5px;line-height:19.5px;color:#111;font-weight:normal;font-family:'Liberation Sans',sans-serif;transform:scaleX(0.9941);transform-origin:0 0;">0.00 "</div>
<svg style="position:absolute;left:2258.5px;top:906.8px;" width="12" height="30" viewBox="0 0 12 30"><path d="M1 5 H11 L6 0 Z M1 27 H11 L6 32 Z" fill="#111" transform="scale(1,0.9)"/></svg>
<div style="position:absolute;left:2337px;top:836.1px;width:183.2px;height:51.6px;background:#fff;border:1.5px solid #8f8f8f;box-sizing:border-box;"></div>
<div id="t76" class="tx" style="left:2343px;top:853.09px;font-size:19.5px;line-height:19.5px;color:#111;font-weight:normal;font-family:'Liberation Sans',sans-serif;transform:scaleX(0.9941);transform-origin:0 0;">0.08 "</div>
<svg style="position:absolute;left:2499.2px;top:845.1px;" width="12" height="30" viewBox="0 0 12 30"><path d="M1 5 H11 L6 0 Z M1 27 H11 L6 32 Z" fill="#111" transform="scale(1,0.9)"/></svg>
<div style="position:absolute;left:2337px;top:897.8px;width:183.2px;height:51.3px;background:#fff;border:1.5px solid #8f8f8f;box-sizing:border-box;"></div>
<div id="t77" class="tx" style="left:2343px;top:914.79px;font-size:19.5px;line-height:19.5px;color:#111;font-weight:normal;font-family:'Liberation Sans',sans-serif;transform:scaleX(0.9941);transform-origin:0 0;">2.75 "</div>
<svg style="position:absolute;left:2499.2px;top:906.8px;" width="12" height="30" viewBox="0 0 12 30"><path d="M1 5 H11 L6 0 Z M1 27 H11 L6 32 Z" fill="#111" transform="scale(1,0.9)"/></svg>
<div style="position:absolute;left:2337px;top:959.5px;width:183.2px;height:50.7px;background:#fff;border:1.5px solid #8f8f8f;box-sizing:border-box;"></div>
<div style="position:absolute;left:2496px;top:965px;width:21px;height:21px;background:#f0f2f4;"></div>
<div style="position:absolute;left:2496px;top:987px;width:21px;height:20px;background:#f0f2f4;"></div>
<div id="t78" class="tx" style="left:2343px;top:976.49px;font-size:19.5px;line-height:19.5px;color:#111;font-weight:normal;font-family:'Liberation Sans',sans-serif;transform:scaleX(0.9941);transform-origin:0 0;">0.00 "</div>
<svg style="position:absolute;left:2499.2px;top:968.5px;" width="12" height="30" viewBox="0 0 12 30"><path d="M1 5 H11 L6 0 Z M1 27 H11 L6 32 Z" fill="#111" transform="scale(1,0.9)"/></svg>
<svg style="position:absolute;left:2063px;top:850px;" width="24" height="22" viewBox="0 0 24 22"><path d="M7 1 H15 M11 1 V12 M7 12 H15" fill="none" stroke="#5b8fc4" stroke-width="1.4"/><path d="M0.5 16.5 H21 M0.5 20 H21" stroke="#777" stroke-width="1.4"/></svg>
<svg style="position:absolute;left:2063px;top:911px;" width="24" height="23" viewBox="0 0 24 23"><path d="M0.5 1.5 H21 M0.5 5 H21" stroke="#777" stroke-width="1.4"/><path d="M7 9 H15 M11 9 V20.5 M7 20.5 H15" fill="none" stroke="#5b8fc4" stroke-width="1.4"/></svg>
<svg style="position:absolute;left:2303px;top:852px;" width="26" height="18" viewBox="0 0 26 18"><path d="M15 1.5 H24 M15 6 H24 M15 10.5 H24 M0.5 14.5 H24" stroke="#777" stroke-width="1.3"/><path d="M1 3 V11 M1 7 H12 M12 3 V11" fill="none" stroke="#5b8fc4" stroke-width="1.4"/></svg>
<svg style="position:absolute;left:2303px;top:913px;" width="26" height="18" viewBox="0 0 26 18"><path d="M0.5 1.5 H9 M0.5 6 H9 M0.5 10.5 H9 M0.5 14.5 H24" stroke="#777" stroke-width="1.3"/><path d="M12 3 V11 M12 7 H23 M23 3 V11" fill="none" stroke="#5b8fc4" stroke-width="1.4"/></svg>
<svg style="position:absolute;left:2303px;top:973px;" width="24" height="24" viewBox="0 0 24 24"><path d="M1 2 V10 M1 6 H10 M10 2 V10" fill="none" stroke="#5b8fc4" stroke-width="1.4"/><path d="M13 6 H21 M0.5 14.5 H21 M0.5 19 H21 M0.5 23 H15" stroke="#777" stroke-width="1.3"/></svg>
<svg style="position:absolute;left:2063px;top:969px;" width="34" height="31" viewBox="0 0 34 31"><path d="M7.5 1 V28.5 M1.5 7 L7.5 1 L13.5 7 M1.5 22.5 L7.5 28.5 L13.5 22.5" fill="none" stroke="#5b8fc4" stroke-width="1.3"/><path d="M16 7.2 H32.5 M16 13.2 H32.5 M16 19 H32.5 M16 25 H32.5" stroke="#777" stroke-width="1.4"/></svg>
<svg style="position:absolute;left:2108.8px;top:980.3px;" width="11.9" height="7" viewBox="0 0 11.9 7"><path d="M0 0 H11.9 L5.95 7 Z" fill="#111"/></svg>
<div style="position:absolute;left:0px;top:1391px;width:2560px;height:2px;background:#bdbdbd;"></div>
<div style="position:absolute;left:0px;top:1393px;width:2560px;height:47px;background:#fff;"></div>
<div style="position:absolute;left:15.5px;top:1400.8px;width:298.5px;height:29.5px;background:#f7fbfc;border:2px solid #4d8ea6;border-radius:2px;box-sizing:border-box;"></div>
<div id="t79" class="tx" style="left:21px;top:1407.51px;font-size:17px;line-height:17px;color:#8a8a8a;font-weight:normal;font-family:'Liberation Sans',sans-serif;transform:scaleX(0.9095);transform-origin:0 0;">Search</div>
<svg style="position:absolute;left:329px;top:1406px;" width="31" height="17" viewBox="0 0 31 17"><path d="M1 15.5 L15 2 L29 15.5" fill="none" stroke="#c8c8c8" stroke-width="1.6"/></svg>
<svg style="position:absolute;left:370px;top:1406px;" width="31" height="17" viewBox="0 0 31 17"><path d="M1 1.5 L15 15 L29 1.5" fill="none" stroke="#c8c8c8" stroke-width="1.6"/></svg>
<div style="position:absolute;left:420.2px;top:1402px;width:1.8px;height:27px;background:#c9c9c9;"></div>
<div style="position:absolute;left:539.3000000000001px;top:1402px;width:1.8px;height:27px;background:#c9c9c9;"></div>
<div style="position:absolute;left:744.6px;top:1402px;width:1.8px;height:27px;background:#c9c9c9;"></div>
<div style="position:absolute;left:818.7px;top:1402px;width:1.8px;height:27px;background:#c9c9c9;"></div>
<div style="position:absolute;left:995.4000000000001px;top:1402px;width:1.8px;height:27px;background:#c9c9c9;"></div>
<div style="position:absolute;left:1147.8px;top:1402px;width:1.8px;height:27px;background:#c9c9c9;"></div>
<div id="t80" class="tx" style="left:436px;top:1409.23px;font-size:16.5px;line-height:16.5px;color:#555;font-weight:normal;font-family:'Liberation Sans',sans-serif;transform:scaleX(1.0544);transform-origin:0 0;">Page 1 of 3</div>
<div id="t81" class="tx" style="left:554.5px;top:1409.23px;font-size:16.5px;line-height:16.5px;color:#555;font-weight:normal;font-family:'Liberation Sans',sans-serif;transform:scaleX(1.0574);transform-origin:0 0;">2 words, 16 characters</div>
<div style="position:absolute;left:752.9px;top:1398.9px;width:59.6px;height:32.8px;background:#c4dce6;border-radius:2px;"></div>
<div id="t82" class="tx" style="left:760.3px;top:1409.23px;font-size:16.5px;line-height:16.5px;color:#555;font-weight:normal;font-family:'Liberation Sans',sans-serif;transform:scaleX(1.0852);transform-origin:0 0;">Insert</div>
<div id="t83" class="tx" style="left:835px;top:1409.23px;font-size:16.5px;line-height:16.5px;color:#555;font-weight:normal;font-family:'Liberation Sans',sans-serif;transform:scaleX(1.0718);transform-origin:0 0;">Standard selection</div>
<div id="t84" class="tx" style="left:1011.8px;top:1404.76px;font-size:18px;line-height:18px;color:#222;font-weight:normal;font-family:'Liberation Sans',sans-serif;transform:scaleX(0.9155);transform-origin:0 0;">English (USA)</div>
<svg style="position:absolute;left:1124px;top:1411.5px;" width="13" height="9" viewBox="0 0 13 9"><path d="M0 0 H12.7 L6.35 8.5 Z" fill="#8d949e"/></svg>
<svg style="position:absolute;left:2264px;top:1405px;" width="17" height="22" viewBox="0 0 17 22"><path d="M1 1 H10 L15 6 V20 H1 Z" fill="none" stroke="#d6d6d6" stroke-width="1.4"/><path d="M8 19 V10 M5 13 L8 10 L11 13" fill="none" stroke="#d6d6d6" stroke-width="1.4"/></svg>
<svg style="position:absolute;left:2305px;top:1404px;" width="17" height="22" viewBox="0 0 17 22"><path d="M6 3 H1 V20 H15 V3 H10" fill="none" stroke="#333" stroke-width="1.6"/><path d="M8 0 V13 M5 10 L8 13.5 L11 10" fill="none" stroke="#333" stroke-width="1.6"/></svg>
<div style="position:absolute;left:2339px;top:1402px;width:1.8px;height:26.3px;background:#c9c9c9;"></div>
<svg style="position:absolute;left:2355px;top:1402px;" width="27" height="26" viewBox="0 0 27 26"><circle cx="11.5" cy="11.5" r="10.3" fill="none" stroke="#3a4050" stroke-width="2"/><path d="M18.5 19 L24 24.5" stroke="#3a4050" stroke-width="2.4"/><text x="6.5" y="18" font-family="Liberation Sans" font-size="17" font-weight="bold" fill="#3f7fb6">1</text></svg>
<div style="position:absolute;left:2402.2px;top:1414.6px;width:13.4px;height:2.2px;background:#2e7bb6;"></div>
<div id="t85" class="tx" style="left:2446px;top:1405.76px;font-size:18px;line-height:18px;color:#111;font-weight:normal;font-family:'Liberation Sans',sans-serif;transform:scaleX(0.9121);transform-origin:0 0;">100%</div>
<svg style="position:absolute;left:2502px;top:1411.4px;" width="12" height="8.5" viewBox="0 0 12 8.5"><path d="M0 0 H11.7 L5.85 8.1 Z" fill="#8d949e"/></svg>
<svg style="position:absolute;left:2533px;top:1408.5px;" width="14" height="14" viewBox="0 0 14 14"><path d="M6.7 0 V13.4 M0 6.7 H13.4" stroke="#2e7bb6" stroke-width="2.2"/></svg>
<svg style="position:absolute;left:18px;top:17px;" width="93" height="44" viewBox="0 0 93 44"><circle cx="13" cy="22" r="9.5" fill="none" stroke="#161616" stroke-width="6"/><circle cx="46" cy="22" r="16.5" fill="none" stroke="#161616" stroke-width="7"/><circle cx="79" cy="22" r="9.5" fill="none" stroke="#161616" stroke-width="6"/></svg>
<svg style="position:absolute;left:157px;top:26px;" width="27" height="24" viewBox="0 0 27 24"><path d="M0 2 H10 L13 5 H26 V22 H0 Z" fill="#161616"/></svg>
<svg style="position:absolute;left:237px;top:26px;" width="27" height="24" viewBox="0 0 27 24"><rect x="1" y="1" width="24" height="21" fill="none" stroke="#161616" stroke-width="2.5"/><path d="M3 20 L10 12 L14 16 L18 11 L23 20 Z" fill="#161616"/></svg>
<svg style="position:absolute;left:323px;top:24px;" width="17" height="28" viewBox="0 0 17 28"><path d="M9 0 L1 14 H8 L6 27 L16 11 H9 Z" fill="#161616"/></svg>
<svg style="position:absolute;left:399px;top:24px;" width="29" height="28" viewBox="0 0 29 28"><circle cx="14" cy="13" r="10" fill="none" stroke="#161616" stroke-width="5"/><path d="M21 20 L26 26 L19 24 Z" fill="#161616"/></svg>
<svg style="position:absolute;left:400px;top:59px;" width="28" height="16" viewBox="0 0 28 16"><path d="M0 16 L14 1 L28 16 Z" fill="#141414"/></svg>
<svg style="position:absolute;left:478px;top:28px;" width="31" height="22" viewBox="0 0 31 22"><rect x="1" y="1" width="29" height="20" fill="#161616"/><path d="M2 3 L15.5 13 L29 3" fill="none" stroke="#040b13" stroke-width="2.5"/></svg>
<svg style="position:absolute;left:559px;top:24px;" width="32" height="29" viewBox="0 0 32 29"><circle cx="19" cy="8" r="6.5" fill="#161616"/><path d="M7 28 C7 18 12 15 19 15 C26 15 31 18 31 28 Z" fill="#161616"/><circle cx="9" cy="11" r="5" fill="#161616"/><path d="M0 25 C0 18 4 16 9 16 L9 25 Z" fill="#161616"/></svg>
<svg style="position:absolute;left:641px;top:26px;" width="27" height="27" viewBox="0 0 27 27"><rect x="2" y="4" width="23" height="21" fill="none" stroke="#161616" stroke-width="3"/><rect x="2" y="4" width="23" height="6" fill="#161616"/><path d="M7 0 V6 M20 0 V6" stroke="#161616" stroke-width="3"/></svg>
<svg style="position:absolute;left:2418px;top:24px;" width="26" height="28" viewBox="0 0 26 28"><circle cx="13" cy="8" r="6" fill="#141414"/><path d="M1 26 C1 17 6 15 13 15 C20 15 25 17 25 26 Z" fill="#141414"/></svg>
<svg style="position:absolute;left:2305px;top:12px" width="100" height="60" viewBox="0 0 100 60"><defs><clipPath id="ca1"><circle cx="28.5" cy="28.5" r="19.6"/></clipPath><clipPath id="ca2"><circle cx="65" cy="29" r="23.5"/></clipPath></defs><circle cx="28.5" cy="28.5" r="22.3" fill="#1d4fae"/><g clip-path="url(#ca1)"><rect x="0" y="0" width="60" height="60" fill="#7a7c80"/><rect x="5" y="0" width="12" height="60" fill="#a5a7a9"/><path d="M14 60 L16 34 L28 28 L40 34 L44 60 Z" fill="#2a3040"/><path d="M19 40 L28 34 L37 40 L33 60 H23 Z" fill="#7f93ad"/><ellipse cx="28" cy="21" rx="7" ry="9" fill="#c9a58c"/><path d="M18 16 C18 6 38 6 38 16 L37 20 H19 Z" fill="#25282e"/><path d="M22 25 C24 31 32 31 34 25 L33 29 C30 33 26 33 23 29 Z" fill="#4a3a30"/></g><circle cx="65" cy="29" r="26.5" fill="#58a12b"/><g clip-path="url(#ca2)"><rect x="30" y="0" width="70" height="60" fill="#f4f2f0"/><path d="M36 40 C40 30 52 28 62 34 L66 60 H36 Z" fill="#d83040"/><ellipse cx="66" cy="34" rx="11" ry="12" fill="#e8b8a0"/><path d="M50 24 C50 10 74 6 82 18 L86 22 C80 26 66 28 50 28 Z" fill="#9a4a40"/><path d="M52 28 C48 40 54 54 58 58 L54 60 C44 50 46 34 52 28 Z" fill="#7a4025"/><path d="M78 30 C84 40 80 52 74 58 L80 60 C88 48 86 36 80 28 Z" fill="#8a5030"/><path d="M40 28 C44 20 48 16 52 14 L54 24 C50 26 46 30 44 34 Z" fill="#e8b8a0"/></g></svg>
<svg style="position:absolute;left:2481px;top:15px;" width="47" height="47" viewBox="0 0 47 47"><circle cx="23.5" cy="23.5" r="23" fill="#080808"/><circle cx="23" cy="18" r="8" fill="#101010"/><path d="M8 44 C10 30 36 30 40 44 Z" fill="#0e0e0e"/></svg>
</body></html>
